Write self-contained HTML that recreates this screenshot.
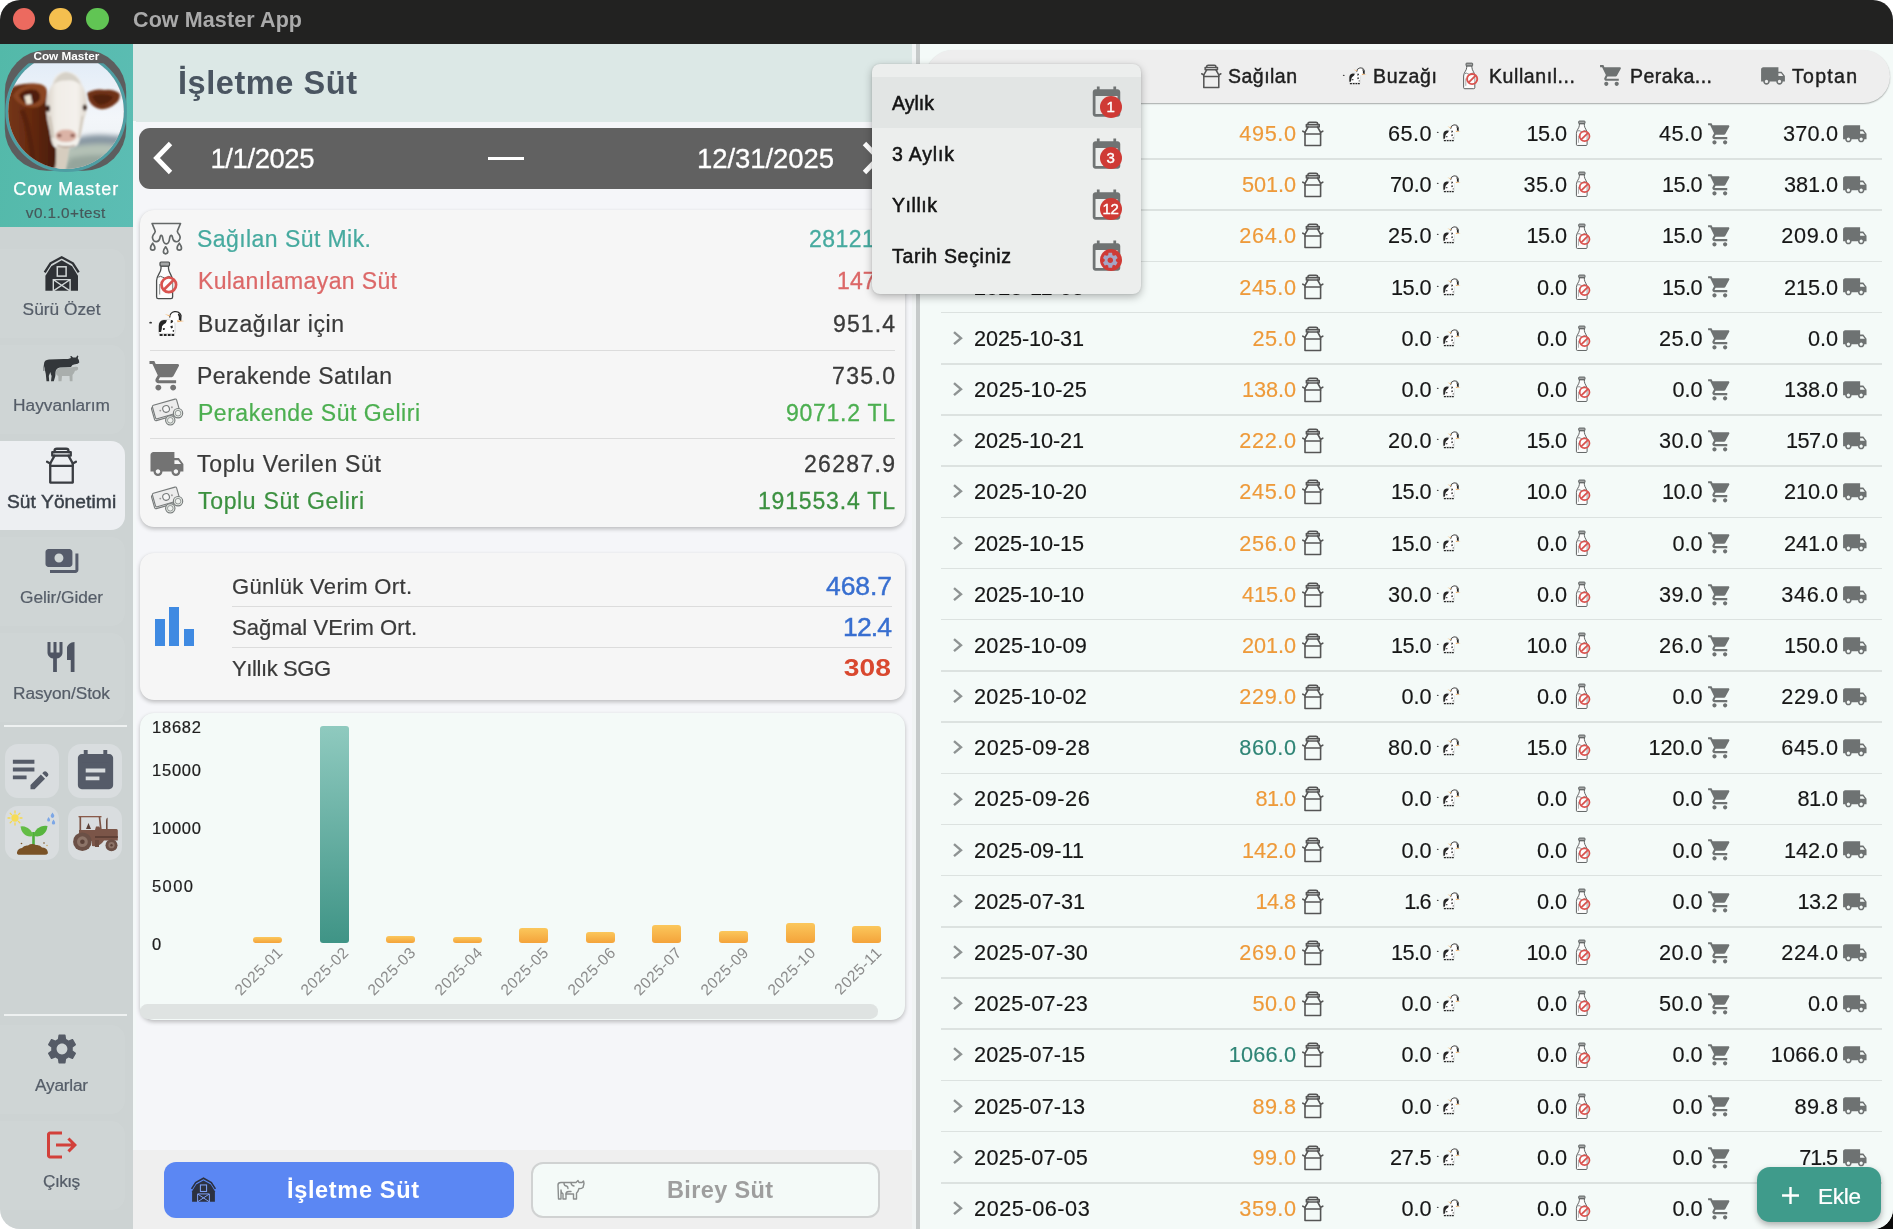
<!DOCTYPE html>
<html lang="tr"><head><meta charset="utf-8"><title>Cow Master App</title>
<style>
html,body{margin:0;padding:0;background:#fff;}
body{width:1893px;height:1229px;overflow:hidden;position:relative;font-family:"Liberation Sans", sans-serif;}
#win{will-change:transform;position:absolute;left:0;top:0;width:1893px;height:1229px;border-radius:20px;overflow:hidden;background:#f5f6f9;}
.b{position:absolute;box-sizing:border-box;}
.t{position:absolute;white-space:nowrap;}
svg{overflow:visible}
</style></head><body>
<svg width="0" height="0" style="position:absolute"><defs>
<linearGradient id="gteal" x1="0" y1="0" x2="0" y2="1"><stop offset="0" stop-color="#8fcabf"/><stop offset="1" stop-color="#3f9486"/></linearGradient>
<linearGradient id="gor" x1="0" y1="0" x2="0" y2="1"><stop offset="0" stop-color="#fbc75c"/><stop offset="1" stop-color="#f4a33a"/></linearGradient>
<symbol id="can" viewBox="0 0 25.6 25.6"><g fill="none" stroke="currentColor" stroke-width="1.6" stroke-linejoin="round" stroke-linecap="round">
<path d="M8 3.6V2.6Q8 1.2 9.6 1.2H16Q17.6 1.2 17.6 2.6V3.6"/>
<path d="M6.4 3.6H19.2V6H6.4Z"/>
<path d="M8 6L5 11.4V24.6H20.6V11.4L17.6 6"/>
<path d="M2.8 10.2L5 11.4M22.8 10.2L20.6 11.4"/>
<path d="M5 13H20.6"/>
</g></symbol>
<symbol id="cart" viewBox="0 0 24 24"><path fill="currentColor" d="M7 18c-1.1 0-1.99.9-1.99 2S5.9 22 7 22s2-.9 2-2-.9-2-2-2zM1 2v2h2l3.6 7.59-1.35 2.45c-.16.28-.25.61-.25.96 0 1.1.9 2 2 2h12v-2H7.42c-.14 0-.25-.11-.25-.25l.03-.12.9-1.63h7.45c.75 0 1.41-.41 1.75-1.03l3.58-6.49c.08-.14.12-.31.12-.48 0-.55-.45-1-1-1H5.21l-.94-2H1zm16 16c-1.1 0-1.99.9-1.99 2s.89 2 1.99 2 2-.9 2-2-.9-2-2-2z"/></symbol>
<symbol id="truck" viewBox="0 0 24 24"><path fill="currentColor" d="M20 8h-3V4H3c-1.1 0-2 .9-2 2v11h2c0 1.66 1.34 3 3 3s3-1.34 3-3h6c0 1.66 1.34 3 3 3s3-1.34 3-3h2v-5l-3-4zM6 18.5c-.83 0-1.5-.67-1.5-1.5s.67-1.5 1.5-1.5 1.5.67 1.5 1.5-.67 1.5-1.5 1.5zm13.5-9l1.96 2.5H17V9.500h2.5zm-1.5 9c-.83 0-1.5-.67-1.5-1.5s.67-1.5 1.5-1.5 1.5.67 1.5 1.5-.67 1.5-1.5 1.5z"/></symbol>
<symbol id="bottle" viewBox="0 0 32 42">
<path d="M11 7V9.500C11 13.500 6.600 16.500 6.600 21.500V38Q6.600 39.600 8.200 39.600H21Q22.600 39.600 22.600 38V21.500C22.600 16.500 18.500 13.500 18.500 9.500V7Z" fill="#fcfcfc" stroke="#4a4d4d" stroke-width="1.300" stroke-linejoin="round"/>
<rect x="10" y="3" width="9.500" height="4" rx="1" fill="#a4a6a6" stroke="#4a4d4d" stroke-width="1.200"/>
<path d="M8.400 18.200q2.100 -1.800 4.200 0t4.200 0t4 0" fill="none" stroke="#5a5d5d" stroke-width="1"/>
<path d="M9.700 25V35.500" stroke="#7a7d7d" stroke-width="0.900"/>
<circle cx="18.800" cy="25.800" r="7.300" fill="rgba(255,255,255,0.4)" stroke="#d9534f" stroke-width="2.700"/>
<path d="M13.600 31L24 20.600" stroke="#d9534f" stroke-width="2.700"/>
</symbol>
<symbol id="calf" viewBox="0 0 38 32">
<ellipse cx="2.600" cy="16.700" rx="1.400" ry="0.900" fill="#333"/>
<path d="M10.800 27.500V20Q10.800 14.500 16 13.800L22 13.200Q26.800 13.600 27 18.500V27.500Z" fill="#fff" stroke="#bbb" stroke-width="0.500"/>
<path d="M10.800 26V20Q10.800 14.500 16 14L19 14.200Q18.400 17.500 15.500 18.600Q13.400 19.800 13.800 23L13 26Z" fill="#262626"/>
<path d="M14.800 22.500q1.400 -1 2.300 0.200q-0.300 1.500 -2 1.300z" fill="#262626"/>
<circle cx="27.300" cy="10.800" r="5.800" fill="#fff"/>
<path d="M21.700 11.500A5.800 5.800 0 0 1 33 9.500L32.600 15" fill="none" stroke="#2a2a2a" stroke-width="1.300"/>
<path d="M30.600 7.500Q33.400 9 32.800 14.200L30.800 14Q31.300 10.500 29.800 8.200Z" fill="#262626"/>
<path d="M16.800 8.200L22.400 9.300L21.800 10.600Z" fill="#f2b46e"/>
<path d="M28.800 14.200L36.400 15L29.600 16.300Z" fill="#f2b46e"/>
<path d="M22.800 14.200q1.600 -0.400 2.400 1q-0.800 2.200 -2.600 2z M22.300 20.200l2.200 -0.800l0.400 2.400l-1.800 0.600z M24.800 24l1.400 0.300l-0.400 1.600l-1.200 -0.300z" fill="#262626"/>
<path d="M11.600 29H14.600M15.800 29H18.600M19.800 29H22.600M23.600 29H26.200" stroke="#262626" stroke-width="1.800"/>
</symbol>
<symbol id="chev" viewBox="0 0 24 24"><path fill="currentColor" d="M10 6L8.590 7.410 13.170 12l-4.580 4.590L10 18l6-6z"/></symbol>
<symbol id="plus" viewBox="0 0 24 24"><path fill="currentColor" d="M19 13h-6v6h-2v-6H5v-2h6V5h2v6h6v2z"/></symbol>
<symbol id="gear" viewBox="0 0 24 24"><path fill="currentColor" d="M19.140 12.940c.04-.3.060-.61.060-.94 0-.32-.020-.64-.070-.94l2.030-1.580c.18-.14.23-.41.120-.61l-1.920-3.320c-.12-.22-.37-.29-.59-.22l-2.390.96c-.5-.38-1.030-.7-1.620-.94l-.36-2.540c-.04-.24-.24-.41-.48-.41h-3.840c-.24 0-.43.170-.47.410l-.36 2.540c-.59.240-1.130.570-1.620.940l-2.390-.96c-.22-.08-.47 0-.59.220L2.740 8.870c-.12.210-.08.470.12.610l2.030 1.580c-.05.300-.09.630-.09.940s.02.640.07.940l-2.030 1.580c-.18.140-.23.410-.12.610l1.920 3.320c.12.220.37.290.59.220l2.390-.96c.5.380 1.030.7 1.620.94l.36 2.540c.05.240.24.410.48.410h3.840c.24 0 .44-.17.47-.41l.36-2.540c.59-.24 1.130-.56 1.620-.94l2.390.96c.22.080.47 0 .59-.22l1.920-3.320c.12-.22.070-.47-.12-.61l-2.010-1.580zM12 15.600c-1.980 0-3.600-1.620-3.600-3.600s1.620-3.600 3.600-3.600 3.600 1.620 3.600 3.600-1.620 3.600-3.600 3.600z"/></symbol>
<symbol id="logout" viewBox="0 0 24 24"><path fill="currentColor" d="M17 7l-1.410 1.410L18.170 11H8v2h10.170l-2.580 2.580L17 17l5-5zM4 5h8V3H4c-1.100 0-2 .9-2 2v14c0 1.100.9 2 2 2h8v-2H4V5z"/></symbol>
<symbol id="barchart" viewBox="0 0 24 24"><path fill="currentColor" d="M5 9.200h3V19H5zM10.600 5h2.800v14h-2.800zm5.600 8H19v6h-2.800z"/></symbol>
<symbol id="restaurant" viewBox="0 0 24 24"><path fill="currentColor" d="M11 9H9V2H7v7H5V2H3v7c0 2.120 1.660 3.840 3.750 3.970V22h2.500v-9.030C11.340 12.840 13 11.120 13 9V2h-2v7zm5-3v8h2.500v8H21V2c-2.760 0-5 2.240-5 4z"/></symbol>
<symbol id="payments" viewBox="0 0 24 24"><path fill="currentColor" d="M19 14V6c0-1.100-.9-2-2-2H3c-1.100 0-2 .9-2 2v8c0 1.100.9 2 2 2h14c1.100 0 2-.9 2-2zm-9-1c-1.660 0-3-1.340-3-3s1.340-3 3-3 3 1.340 3 3-1.340 3-3 3zm13-6v11c0 1.100-.9 2-2 2H4v-2h17V7h2z"/></symbol>
<symbol id="eventnote" viewBox="0 0 24 24"><path fill="currentColor" fill-rule="evenodd" d="M19 3h-1V1h-2v2H8V1H6v2H5c-1.110 0-2 .9-2 2v14c0 1.100.890 2 2 2h14c1.100 0 2-.9 2-2V5c0-1.100-.9-2-2-2zM7 10.500h10v2H7zM7 14.500h7v2H7z"/><path d="M5.200 7.400H18.800" stroke="currentColor" stroke-width="0.1"/></symbol>
<symbol id="editnote" viewBox="0 0 24 24"><path fill="currentColor" d="M3 10h11v2H3v-2zm0-2h11V6H3v2zm0 8h7v-2H3v2zm15.010-3.130l.71-.71c.39-.39 1.020-.39 1.410 0l.71.71c.39.39.39 1.020 0 1.410l-.71.71-2.120-2.120zm-.71.71l-5.300 5.300V21h2.120l5.300-5.300-2.120-2.120z"/></symbol>
<symbol id="cal" viewBox="0 0 24 24"><path fill="currentColor" d="M20 3h-1V1h-2v2H7V1H5v2H4c-1.100 0-2 .9-2 2v16c0 1.100.9 2 2 2h16c1.100 0 2-.9 2-2V5c0-1.100-.9-2-2-2zm0 18H4V8h16v13z"/></symbol>
<symbol id="barn" viewBox="0 0 40 40">
<path d="M3.700 18.400L9.500 9.300L20.700 3.200L31.900 9.300L37.700 18.400" fill="none" stroke="currentColor" stroke-width="2.300" stroke-linejoin="miter"/>
<path fill="currentColor" d="M4.400 36.800V21.800L10.300 12.200L20.700 6.300L31.100 12.200L37 21.800V36.800Z"/>
<rect x="16.300" y="12.800" width="8.800" height="9.300" fill="none" stroke="var(--bg)" stroke-width="1.500"/>
<path d="M12.300 37.200V25.600H29.100V37.200M12.800 26L28.600 36.600M28.600 26L12.800 36.600" fill="none" stroke="var(--bg)" stroke-width="1.400"/>
</symbol>
</defs></svg>
<div class="b" style="right:0;bottom:0;width:22px;height:22px;background:#0a0a0a;"></div>
<div id="win">
<div class="b" style="left:0px;top:0px;width:1893px;height:44px;background:#222221;"></div>
<div class="b" style="left:12.600000000000001px;top:8.100000000000001px;width:22.4px;height:22.4px;background:#ec6a5f;border-radius:50%;"></div>
<div class="b" style="left:49.400000000000006px;top:8.100000000000001px;width:22.4px;height:22.4px;background:#f4bf4f;border-radius:50%;"></div>
<div class="b" style="left:86.39999999999999px;top:8.100000000000001px;width:22.4px;height:22.4px;background:#61c554;border-radius:50%;"></div>
<div class="t" style="left:133.00px;top:5.55px;font-size:21.5px;line-height:28px;color:#aaaaaa;letter-spacing:0.105px;font-weight:700;">Cow Master App</div>
<div class="b" style="left:0px;top:44px;width:133px;height:1185px;background:#cdd3d3;"></div>
<div class="b" style="left:0px;top:44px;width:133px;height:183px;background:linear-gradient(100deg,#53b9a9,#5cbdb4);"></div>
<svg class="b" style="left:0;top:44px" width="133" height="183" viewBox="0 44 133 183">
<defs>
<clipPath id="lgc"><circle cx="66.050" cy="111.200" r="57.800"/></clipPath>
<clipPath id="lgr"><rect x="0" y="63.300" width="133" height="120"/></clipPath>
<filter id="bl1" x="-20%" y="-20%" width="140%" height="140%"><feGaussianBlur stdDeviation="0.900"/></filter>
<filter id="bl2" x="-20%" y="-20%" width="140%" height="140%"><feGaussianBlur stdDeviation="2.400"/></filter>
<linearGradient id="sky" x1="0" y1="0" x2="0" y2="1"><stop offset="0" stop-color="#e2ecf7"/><stop offset="0.500" stop-color="#f3f6fa"/><stop offset="1" stop-color="#e9edf0"/></linearGradient>
<linearGradient id="brn" x1="0" y1="0" x2="1" y2="0"><stop offset="0" stop-color="#7a3a1c"/><stop offset="0.550" stop-color="#65290f"/><stop offset="1" stop-color="#451a09"/></linearGradient>
<linearGradient id="fce" x1="0" y1="0" x2="1" y2="0"><stop offset="0" stop-color="#d9d2c8"/><stop offset="0.250" stop-color="#f1ede7"/><stop offset="0.750" stop-color="#f4f1ec"/><stop offset="1" stop-color="#ddd6cc"/></linearGradient>
</defs>
<rect x="4.800" y="49.900" width="121.400" height="120.900" rx="42" ry="42" fill="#5d5d5e"/>
<circle cx="66.050" cy="111.200" r="59.200" fill="none" stroke="#4e9ea3" stroke-width="3.200" clip-path="url(#lgr)"/>
<g clip-path="url(#lgr)"><g clip-path="url(#lgc)">
<rect x="0" y="60" width="133" height="115" fill="url(#sky)"/>
<g filter="url(#bl2)">
<path d="M72 139Q92 133 112 135.500L130 137V176H60Z" fill="#8796a2"/>
<path d="M66 148Q95 141 128 146V176H60Z" fill="#b4c1b6"/>
<path d="M70 158Q96 152 128 158V176H60Z" fill="#95a59c"/>
</g>
<g filter="url(#bl1)">
<path d="M0 102Q6 88 18 85Q30 82 42 85Q47 87 47 93L46.500 100Q45.500 110 47.500 120Q50 130 51.600 141Q53 147 56 148L57 172H0Z" fill="url(#brn)"/>
<path d="M13 96Q18 86 31 83.700Q42 83 46 88Q48 96 44 103Q38 109 28 107Q18 105 13 96Z" fill="#8a4522"/>
<path d="M19 95Q25 88 36 90Q41 93 40 99Q36 105 28 104Q21 102 19 95Z" fill="#4f1f0c"/>
<path d="M24.300 96L30.500 94.500L32.300 103.600L26.600 104.600Z" fill="#ece3d2"/>
<path d="M22 110Q30 128 34 170" stroke="#4a1c0a" stroke-width="5" fill="none" opacity="0.550"/>
<path d="M87 93Q95 88 105 90Q114 89 119.800 94Q120.500 100 115 104Q108 110 100 109Q93 108 88.500 100Z" fill="#6f3117"/>
<path d="M92 96Q102 92.500 113 96.500Q110 104 100 105Q95 103 92 96Z" fill="#53220e"/>
<path d="M56 147H69.500L67.500 160L65 174H54Q57 160 56 147Z" fill="#d6cdbf"/>
<path d="M52.600 84Q55 72 66 71.500Q78 72 81.600 84Q86.500 92 87 104Q87 112 84 120Q82 132 79.500 141Q78 147 72 147.500H59Q53 147 51.600 141Q50 130 47.500 120Q45.500 110 46.500 100Q48 90 52.600 84Z" fill="url(#fce)"/>
<path d="M53 85Q57 73 66 72Q77 73 81 85Q74 79 66 80.500Q58 80 53 85Z" fill="#d6d1c8"/>
<path d="M55.500 135Q57 129.500 66 129.500Q75 129.500 76.500 135Q77 141.500 66 142Q55 141.500 55.500 135Z" fill="#dbb3a6"/>
<ellipse cx="59.300" cy="135.500" rx="2.300" ry="1.800" fill="#8e5c52"/><ellipse cx="72.600" cy="135.500" rx="2.300" ry="1.800" fill="#8e5c52"/>
<path d="M57 145.500Q66 148.500 75 145.500" stroke="#a99384" stroke-width="1.300" fill="none"/>
<ellipse cx="47.900" cy="108.500" rx="2.200" ry="3.300" fill="#3a241a"/><ellipse cx="84.700" cy="107.500" rx="2" ry="3.100" fill="#3a241a"/>
<path d="M49.500 116Q52 128 53 138" stroke="#c9c0b3" stroke-width="2.400" fill="none"/>
<path d="M82.500 116Q80.500 128 79 138" stroke="#cfc7bb" stroke-width="2" fill="none"/>
</g>
</g></g>
<text x="66.400" y="60.300" text-anchor="middle" font-family="Liberation Sans, sans-serif" font-weight="700" font-size="11.400" fill="#ffffff" textLength="66" lengthAdjust="spacingAndGlyphs">Cow Master</text>
</svg>
<div class="t" style="left:13.30px;top:178.26px;font-size:18px;line-height:23px;color:#ffffff;letter-spacing:0.998px;-webkit-text-stroke:0.25px #ffffff;">Cow Master</div>
<div class="t" style="left:25.85px;top:202.50px;font-size:15.3px;line-height:20px;color:#46585a;letter-spacing:0.422px;-webkit-text-stroke:0.2px #46585a;">v0.1.0+test</div>
<div class="b" style="left:0px;top:249px;width:125px;height:89px;background:rgba(255,255,255,0.06);border-radius:0 14px 14px 0;"></div>
<div class="b" style="left:0px;top:345px;width:125px;height:89px;background:rgba(255,255,255,0.06);border-radius:0 14px 14px 0;"></div>
<div class="b" style="left:0px;top:537px;width:125px;height:89px;background:rgba(255,255,255,0.06);border-radius:0 14px 14px 0;"></div>
<div class="b" style="left:0px;top:633px;width:125px;height:89px;background:rgba(255,255,255,0.06);border-radius:0 14px 14px 0;"></div>
<div class="b" style="left:0px;top:1025px;width:125px;height:89px;background:rgba(255,255,255,0.06);border-radius:0 14px 14px 0;"></div>
<div class="b" style="left:0px;top:1121px;width:125px;height:89px;background:rgba(255,255,255,0.06);border-radius:0 14px 14px 0;"></div>
<div class="b" style="left:0px;top:441px;width:125px;height:89px;background:#edeff2;border-radius:0 14px 14px 0;"></div>
<div class="t" style="left:22.60px;top:298.01px;font-size:17.3px;line-height:22px;color:#555d68;letter-spacing:0.014px;-webkit-text-stroke:0.22px #555d68;">Sürü Özet</div>
<div class="t" style="left:13.10px;top:394.01px;font-size:17.3px;line-height:22px;color:#555d68;letter-spacing:-0.010px;-webkit-text-stroke:0.22px #555d68;">Hayvanlarım</div>
<div class="t" style="left:6.95px;top:489.05px;font-size:19.2px;line-height:25px;color:#3a4049;letter-spacing:0.072px;-webkit-text-stroke:0.45px #3a4049;">Süt Yönetimi</div>
<div class="t" style="left:20.10px;top:586.01px;font-size:17.3px;line-height:22px;color:#555d68;letter-spacing:-0.064px;-webkit-text-stroke:0.22px #555d68;">Gelir/Gider</div>
<div class="t" style="left:13.10px;top:682.01px;font-size:17.3px;line-height:22px;color:#555d68;letter-spacing:-0.108px;-webkit-text-stroke:0.22px #555d68;">Rasyon/Stok</div>
<div class="t" style="left:35.10px;top:1074.01px;font-size:17.3px;line-height:22px;color:#555d68;letter-spacing:-0.248px;-webkit-text-stroke:0.22px #555d68;">Ayarlar</div>
<div class="t" style="left:43.10px;top:1170.01px;font-size:17.3px;line-height:22px;color:#555d68;letter-spacing:-0.602px;-webkit-text-stroke:0.22px #555d68;">Çıkış</div>
<div class="b" style="left:4px;top:725px;width:123px;height:2px;background:#eef1f1;"></div>
<div class="b" style="left:4px;top:1014px;width:123px;height:2px;background:#eef1f1;"></div>
<div class="b" style="left:4.5px;top:744px;width:54px;height:54px;background:#d9dddf;border-radius:13px;"></div>
<div class="b" style="left:68px;top:744px;width:54px;height:54px;background:#d9dddf;border-radius:13px;"></div>
<div class="b" style="left:4.5px;top:806px;width:54px;height:54px;background:#d9dddf;border-radius:13px;"></div>
<div class="b" style="left:68px;top:806px;width:54px;height:54px;background:#d9dddf;border-radius:13px;"></div>
<svg class="b" style="left:41px;top:254px;color:#2f3236;--bg:#d3d8d8;" width="40" height="40"><use href="#barn"/></svg>
<svg class="b" style="left:40px;top:352px" width="44" height="34" viewBox="40 352 44 34">
<path d="M55.800 372.500Q56 368.500 60 368Q66 367.300 72 367.300L75.500 366.800Q77 366.300 78 367.300L78.200 369.200Q77 370.800 75 370.800Q74 374 72.500 375L72.500 381.300H69.800L69.500 376H62L61.500 381.300H58.500L58.300 376Q56 375 55.800 372.500Z" fill="#a9aeac"/>
<path d="M44 364Q44 359.800 49 359.500Q58 358.800 68 359L71 358L70.200 356.300L71.500 356L73 357.600L76 357.500L77.300 355.600L78.400 356L77.800 358.300Q79.600 360.500 79.300 362.500Q78 364.300 75 364.200Q72 364.500 71 367L60 367.500Q56 368 55.500 372L55.300 376L53.800 381.300H51L51.600 376Q50.500 374.500 50.500 372Q49.500 374 48.800 376L49.200 381.300H46.500L45.800 374Q44.500 370 44.800 366Q44 368 44.200 371L43.600 371Q43.300 367 44 364Z" fill="#33373a"/>
</svg>
<svg class="b" style="left:43.3px;top:446.7px;color:#3a3d42;" width="37" height="37"><use href="#can"/></svg>
<svg class="b" style="left:43.6px;top:543px;color:#565c6b;" width="35.9" height="35.9"><use href="#payments"/></svg>
<svg class="b" style="left:43.3px;top:639px;color:#4f5563;" width="36" height="36"><use href="#restaurant"/></svg>
<svg class="b" style="left:7.3px;top:747.6px;color:#555b68;" width="47" height="47"><use href="#editnote"/></svg>
<svg class="b" style="left:71.8px;top:748.2px;color:#555b68;" width="47" height="47"><use href="#eventnote"/></svg>
<svg class="b" style="left:5px;top:806px" width="54" height="54" viewBox="5 806 54 54">
<g stroke="#f5d94e" stroke-width="1.300" stroke-linecap="round"><path d="M15 811V813M15 823V825M8 818H10M20 818H22M10.200 813.200L11.600 814.600M18.400 821.400L19.800 822.800M10.200 822.800L11.600 821.400M18.400 814.600L19.800 813.200"/></g>
<circle cx="15" cy="818" r="3.700" fill="#f7dc55"/>
<path d="M52.500 812.500q1.800 2.400 1.800 3.600a1.800 1.800 0 0 1-3.600 0q0-1.200 1.800-3.600zM48.600 817q1.500 2 1.500 3a1.500 1.500 0 0 1-3 0q0-1 1.500-3zM53.500 819.500q1.700 2.300 1.700 3.400a1.700 1.700 0 0 1-3.400 0q0-1.100 1.700-3.400z" fill="#7da7e6"/>
<path d="M33.500 846V832" stroke="#4fae3c" stroke-width="2.600" fill="none"/>
<path d="M33.300 836Q32 829 24.500 826.500Q22 826 20.500 826.500Q21.500 833 26 835.500Q29.500 837 33.300 836Z" fill="#63bd45"/>
<path d="M33.700 836Q34 829.500 41 826.500Q44.500 825.300 47.500 826Q47 832 42.500 835Q38.500 837.300 33.700 836Z" fill="#57b53e"/>
<path d="M17 852.500Q17.500 848.500 22 848Q24 845 28 845.500Q31.500 843 36 845Q40 844.500 42 847.500Q46.500 847.500 47.500 851Q49 854.500 45 854.800H20Q16.500 854.800 17 852.500Z" fill="#7a5226"/>
<circle cx="21.500" cy="843.500" r="0.800" fill="#7a5226"/><circle cx="44" cy="843" r="0.800" fill="#7a5226"/><circle cx="47" cy="845.500" r="0.700" fill="#c9a24a"/>
</svg>
<svg class="b" style="left:68px;top:806px" width="54" height="54" viewBox="68 806 54 54">
<path d="M78.500 817.300H101.500V816H78.500Z" fill="#8a5a4a"/>
<path d="M80.300 817V832M99.500 817L101 831" stroke="#7c5446" stroke-width="1.700" fill="none"/>
<path d="M86 829L88.500 823L91 829Z" fill="#5b4138"/>
<path d="M106 829V820.500Q106 818.500 107.600 817.500V829Z" fill="#6b4a3e"/>
<path d="M79 830H95L96 826.500H99L101 829H116.500Q117.800 829 117.800 830.500V840.500H104Q100 847 92 846V841H79Z" fill="#7b5548"/>
<path d="M95 836H117.800V838H95Z" fill="#5f4036"/>
<circle cx="82.400" cy="841.700" r="9.300" fill="#6b5046"/><circle cx="82.400" cy="841.700" r="5.400" fill="#8d7468"/><circle cx="82.400" cy="841.700" r="2.300" fill="#5b4138"/>
<circle cx="111.500" cy="845.200" r="6" fill="#6b5046"/><circle cx="111.500" cy="845.200" r="3.100" fill="#8d7468"/><circle cx="111.500" cy="845.200" r="1.200" fill="#5b4138"/>
<path d="M95 840H99V847H95Z" fill="#6b4a3e"/>
</svg>
<svg class="b" style="left:44px;top:1031px;color:#555b66;" width="36" height="36"><use href="#gear"/></svg>
<svg class="b" style="left:44px;top:1127px;color:#d2403a;" width="36" height="36"><use href="#logout"/></svg>
<div class="b" style="left:133px;top:44px;width:779px;height:1185px;background:#f5f6f9;"></div>
<div class="b" style="left:133px;top:44px;width:779px;height:78px;background:#dce8e6;"></div>
<div class="b" style="left:133px;top:121px;width:3px;height:1108px;background:#f4f8f8;"></div>
<div class="t" style="left:178.00px;top:62.24px;font-size:32.5px;line-height:42px;color:#4a5561;letter-spacing:0.561px;font-weight:700;">İşletme Süt</div>
<div class="b" style="left:139px;top:128px;width:766px;height:61px;background:#616161;border-radius:11px;"></div>
<svg class="b" style="left:150px;top:138px" width="30" height="40"><path d="M20.500 5.500L6.500 20L20.500 34.500" fill="none" stroke="#fff" stroke-width="4.800"/></svg>
<svg class="b" style="left:855px;top:138px" width="30" height="40"><path d="M9.500 5.500L23.500 20L9.500 34.500" fill="none" stroke="#fff" stroke-width="4.800"/></svg>
<div class="t" style="left:210.50px;top:141.47px;font-size:27.5px;line-height:36px;color:#ffffff;letter-spacing:-0.435px;-webkit-text-stroke:0.3px #ffffff;">1/1/2025</div>
<div class="t" style="left:697.00px;top:141.47px;font-size:27.5px;line-height:36px;color:#ffffff;letter-spacing:-0.070px;-webkit-text-stroke:0.3px #ffffff;">12/31/2025</div>
<div class="b" style="left:488px;top:156.6px;width:36px;height:3.2px;background:#ffffff;"></div>
<div class="b" style="left:140px;top:210px;width:765px;height:317px;background:#f6f6f6;border-radius:14px;box-shadow:0 2px 4px rgba(0,0,0,0.24),0 0 1px rgba(0,0,0,0.06);"></div>
<div class="t" style="left:197.00px;top:224.03px;font-size:23px;line-height:30px;color:#46aa9f;letter-spacing:0.435px;-webkit-text-stroke:0.22px #46aa9f;">Sağılan Süt Mik.</div>
<div class="t" style="left:809.00px;top:224.03px;font-size:23px;line-height:30px;color:#46aa9f;letter-spacing:0.476px;-webkit-text-stroke:0.3px #46aa9f;">28121.3</div>
<div class="t" style="left:198.00px;top:266.03px;font-size:23px;line-height:30px;color:#dc6868;letter-spacing:0.371px;-webkit-text-stroke:0.22px #dc6868;">Kulanılamayan Süt</div>
<div class="t" style="left:837.00px;top:266.03px;font-size:23px;line-height:30px;color:#dc6868;letter-spacing:0.110px;-webkit-text-stroke:0.3px #dc6868;">147.0</div>
<div class="t" style="left:198.00px;top:309.03px;font-size:23px;line-height:30px;color:#3a3a3a;letter-spacing:0.610px;-webkit-text-stroke:0.22px #3a3a3a;">Buzağılar için</div>
<div class="t" style="left:833.00px;top:309.03px;font-size:23px;line-height:30px;color:#3a3a3a;letter-spacing:1.110px;-webkit-text-stroke:0.3px #3a3a3a;">951.4</div>
<div class="t" style="left:197.00px;top:361.03px;font-size:23px;line-height:30px;color:#3a3a3a;letter-spacing:0.359px;-webkit-text-stroke:0.22px #3a3a3a;">Perakende Satılan</div>
<div class="t" style="left:832.00px;top:361.03px;font-size:23px;line-height:30px;color:#3a3a3a;letter-spacing:1.360px;-webkit-text-stroke:0.3px #3a3a3a;">735.0</div>
<div class="t" style="left:198.00px;top:398.03px;font-size:23px;line-height:30px;color:#4caf50;letter-spacing:0.514px;-webkit-text-stroke:0.22px #4caf50;">Perakende Süt Geliri</div>
<div class="t" style="left:786.00px;top:398.03px;font-size:23px;line-height:30px;color:#4caf50;letter-spacing:0.729px;-webkit-text-stroke:0.3px #4caf50;">9071.2 TL</div>
<div class="t" style="left:197.00px;top:449.03px;font-size:23px;line-height:30px;color:#3a3a3a;letter-spacing:0.711px;-webkit-text-stroke:0.22px #3a3a3a;">Toplu Verilen Süt</div>
<div class="t" style="left:804.00px;top:449.03px;font-size:23px;line-height:30px;color:#3a3a3a;letter-spacing:1.309px;-webkit-text-stroke:0.3px #3a3a3a;">26287.9</div>
<div class="t" style="left:198.00px;top:486.03px;font-size:23px;line-height:30px;color:#3c9140;letter-spacing:0.669px;-webkit-text-stroke:0.22px #3c9140;">Toplu Süt Geliri</div>
<div class="t" style="left:758.00px;top:486.03px;font-size:23px;line-height:30px;color:#3c9140;letter-spacing:0.825px;-webkit-text-stroke:0.3px #3c9140;">191553.4 TL</div>
<div class="b" style="left:150px;top:349.5px;width:745px;height:1.5px;background:#dcdcdc;"></div>
<div class="b" style="left:150px;top:437.5px;width:745px;height:1.5px;background:#dcdcdc;"></div>
<svg class="b" style="left:150px;top:221px" width="32" height="34" viewBox="0 0 32 34">
<g fill="none" stroke="#646868" stroke-width="1.700" stroke-linejoin="round" stroke-linecap="round">
<path d="M2.100 2.500H30.500L27.600 9.500Q27 10.500 28 12Q31 15.500 29.800 18Q28.500 21 26 20.700Q23.500 20.500 22.800 17.500Q22.300 14.600 21.400 14.400Q20 14.400 19.600 17.500Q19 22.800 16.300 22.800Q13.400 22.800 12.800 17.500Q12.400 14.400 11.200 14.400Q10.200 14.600 9.800 17.500Q9 20.500 6.500 20.700Q4 21 2.800 18Q1.600 15.500 4.600 12Q5.600 10.500 5 9.500Z"/>
<path d="M2.700 22.200q2.200 2.900 2.200 4.800a2.200 2.200 0 0 1-4.400 0q0-1.900 2.200-4.800zM15.600 25.800q2.200 2.900 2.200 4.800a2.200 2.200 0 0 1-4.400 0q0-1.900 2.200-4.800zM29.300 22.200q2.200 2.900 2.200 4.800a2.200 2.200 0 0 1-4.400 0q0-1.900 2.200-4.800z"/>
</g></svg>
<svg class="b" style="left:150px;top:259px;" width="32" height="42"><use href="#bottle"/></svg>
<svg class="b" style="left:148px;top:306px;" width="38" height="32"><use href="#calf"/></svg>
<svg class="b" style="left:148.2px;top:357.8px;color:#737373;" width="35.5" height="35.5"><use href="#cart"/></svg>
<svg class="b" style="left:150.0px;top:398.0px" width="35.500" height="30" viewBox="0 0 38 32">
<g fill="#ececec" stroke="#777b7b" stroke-width="1.200" stroke-linejoin="round">
<g transform="rotate(-16 15 13)">
<rect x="2.500" y="6.500" width="27" height="15" rx="1.500"/>
<rect x="4" y="4.800" width="27" height="15" rx="1.500"/>
<circle cx="17.500" cy="12.300" r="3.600" fill="#f6f6f6"/>
<circle cx="11" cy="12.300" r="1" fill="#999" stroke="none"/><circle cx="24" cy="12.300" r="1" fill="#999" stroke="none"/>
</g>
<circle cx="30" cy="16.200" r="5" fill="#e3e8e3"/><circle cx="30" cy="16.200" r="3" fill="#eef1ee" stroke-width="0.800"/>
<circle cx="21.700" cy="23.800" r="5" fill="#e3e8e3"/><circle cx="21.700" cy="23.800" r="3" fill="#eef1ee" stroke-width="0.800"/>
</g></svg>
<svg class="b" style="left:148.5px;top:445.6px;color:#737373;" width="35.9" height="35.9"><use href="#truck"/></svg>
<svg class="b" style="left:150.0px;top:486.0px" width="35.500" height="30" viewBox="0 0 38 32">
<g fill="#ececec" stroke="#777b7b" stroke-width="1.200" stroke-linejoin="round">
<g transform="rotate(-16 15 13)">
<rect x="2.500" y="6.500" width="27" height="15" rx="1.500"/>
<rect x="4" y="4.800" width="27" height="15" rx="1.500"/>
<circle cx="17.500" cy="12.300" r="3.600" fill="#f6f6f6"/>
<circle cx="11" cy="12.300" r="1" fill="#999" stroke="none"/><circle cx="24" cy="12.300" r="1" fill="#999" stroke="none"/>
</g>
<circle cx="30" cy="16.200" r="5" fill="#e3e8e3"/><circle cx="30" cy="16.200" r="3" fill="#eef1ee" stroke-width="0.800"/>
<circle cx="21.700" cy="23.800" r="5" fill="#e3e8e3"/><circle cx="21.700" cy="23.800" r="3" fill="#eef1ee" stroke-width="0.800"/>
</g></svg>
<div class="b" style="left:140px;top:553px;width:765px;height:147px;background:#f6f6f6;border-radius:14px;box-shadow:0 2px 4px rgba(0,0,0,0.24),0 0 1px rgba(0,0,0,0.06);"></div>
<div class="b" style="left:154.6px;top:619px;width:10px;height:27px;background:#3f8ae2;"></div>
<div class="b" style="left:169.3px;top:607.3px;width:10px;height:38.7px;background:#3f8ae2;"></div>
<div class="b" style="left:184px;top:629px;width:10px;height:17px;background:#3f8ae2;"></div>
<div class="t" style="left:232.00px;top:571.88px;font-size:22px;line-height:29px;color:#3a3a3a;letter-spacing:0.323px;-webkit-text-stroke:0.22px #3a3a3a;">Günlük Verim Ort.</div>
<div class="t" style="left:826.00px;top:569.22px;font-size:26.5px;line-height:34px;color:#386fd0;letter-spacing:-0.078px;-webkit-text-stroke:0.45px #386fd0;">468.7</div>
<div class="b" style="left:232px;top:605.5px;width:660px;height:1.5px;background:#dcdcdc;"></div>
<div class="t" style="left:232.00px;top:612.88px;font-size:22px;line-height:29px;color:#3a3a3a;letter-spacing:0.102px;-webkit-text-stroke:0.22px #3a3a3a;">Sağmal VErim Ort.</div>
<div class="t" style="left:843.00px;top:610.22px;font-size:26.5px;line-height:34px;color:#386fd0;letter-spacing:-0.858px;-webkit-text-stroke:0.45px #386fd0;">12.4</div>
<div class="b" style="left:232px;top:646.5px;width:660px;height:1.5px;background:#dcdcdc;"></div>
<div class="t" style="left:232.00px;top:653.88px;font-size:22px;line-height:29px;color:#3a3a3a;letter-spacing:-0.409px;-webkit-text-stroke:0.22px #3a3a3a;">Yıllık SGG</div>
<div class="t" style="left:849.92px;top:652.41px;font-size:24.5px;line-height:32px;color:#d9482f;font-weight:700;transform:scaleX(1.15);transform-origin:100% 50%;">308</div>
<div class="b" style="left:140px;top:713px;width:765px;height:307px;background:#f4faf8;border-radius:14px;box-shadow:0 2px 4px rgba(0,0,0,0.24),0 0 1px rgba(0,0,0,0.06);overflow:hidden;"></div>
<div class="t" style="left:152.00px;top:716.78px;font-size:16.5px;line-height:21px;color:#1e1e1e;letter-spacing:0.779px;-webkit-text-stroke:0.22px #1e1e1e;">18682</div>
<div class="t" style="left:152.00px;top:759.78px;font-size:16.5px;line-height:21px;color:#1e1e1e;letter-spacing:0.779px;-webkit-text-stroke:0.22px #1e1e1e;">15000</div>
<div class="t" style="left:152.00px;top:817.78px;font-size:16.5px;line-height:21px;color:#1e1e1e;letter-spacing:0.779px;-webkit-text-stroke:0.22px #1e1e1e;">10000</div>
<div class="t" style="left:152.00px;top:875.78px;font-size:16.5px;line-height:21px;color:#1e1e1e;letter-spacing:1.431px;-webkit-text-stroke:0.22px #1e1e1e;">5000</div>
<div class="t" style="left:152.00px;top:933.78px;font-size:16.5px;line-height:21px;color:#1e1e1e;-webkit-text-stroke:0.22px #1e1e1e;">0</div>
<svg class="b" style="left:253.10000000000002px;top:937px" width="29" height="6"><rect width="29" height="6" rx="3" fill="url(#gor)"/></svg>
<div class="t" style="left:272.6px;top:943px;font-size:15.5px;line-height:20px;color:#8c8c8c;letter-spacing:0.5px;transform-origin:100% 0;transform:translateX(-100%) rotate(-45deg);">2025-01</div>
<svg class="b" style="left:319.9px;top:726px" width="29" height="217"><rect width="29" height="217" rx="3" fill="url(#gteal)"/></svg>
<div class="t" style="left:339.4px;top:943px;font-size:15.5px;line-height:20px;color:#8c8c8c;letter-spacing:0.5px;transform-origin:100% 0;transform:translateX(-100%) rotate(-45deg);">2025-02</div>
<svg class="b" style="left:386.3px;top:936px" width="29" height="7"><rect width="29" height="7" rx="3" fill="url(#gor)"/></svg>
<div class="t" style="left:405.8px;top:943px;font-size:15.5px;line-height:20px;color:#8c8c8c;letter-spacing:0.5px;transform-origin:100% 0;transform:translateX(-100%) rotate(-45deg);">2025-03</div>
<svg class="b" style="left:453.1px;top:937px" width="29" height="6"><rect width="29" height="6" rx="3" fill="url(#gor)"/></svg>
<div class="t" style="left:472.6px;top:943px;font-size:15.5px;line-height:20px;color:#8c8c8c;letter-spacing:0.5px;transform-origin:100% 0;transform:translateX(-100%) rotate(-45deg);">2025-04</div>
<svg class="b" style="left:519.1px;top:928px" width="29" height="15"><rect width="29" height="15" rx="3" fill="url(#gor)"/></svg>
<div class="t" style="left:538.6px;top:943px;font-size:15.5px;line-height:20px;color:#8c8c8c;letter-spacing:0.5px;transform-origin:100% 0;transform:translateX(-100%) rotate(-45deg);">2025-05</div>
<svg class="b" style="left:586.1px;top:932px" width="29" height="11"><rect width="29" height="11" rx="3" fill="url(#gor)"/></svg>
<div class="t" style="left:605.6px;top:943px;font-size:15.5px;line-height:20px;color:#8c8c8c;letter-spacing:0.5px;transform-origin:100% 0;transform:translateX(-100%) rotate(-45deg);">2025-06</div>
<svg class="b" style="left:652.1px;top:925px" width="29" height="18"><rect width="29" height="18" rx="3" fill="url(#gor)"/></svg>
<div class="t" style="left:671.6px;top:943px;font-size:15.5px;line-height:20px;color:#8c8c8c;letter-spacing:0.5px;transform-origin:100% 0;transform:translateX(-100%) rotate(-45deg);">2025-07</div>
<svg class="b" style="left:719.1px;top:931px" width="29" height="12"><rect width="29" height="12" rx="3" fill="url(#gor)"/></svg>
<div class="t" style="left:738.6px;top:943px;font-size:15.5px;line-height:20px;color:#8c8c8c;letter-spacing:0.5px;transform-origin:100% 0;transform:translateX(-100%) rotate(-45deg);">2025-09</div>
<svg class="b" style="left:786.1px;top:923px" width="29" height="20"><rect width="29" height="20" rx="3" fill="url(#gor)"/></svg>
<div class="t" style="left:805.6px;top:943px;font-size:15.5px;line-height:20px;color:#8c8c8c;letter-spacing:0.5px;transform-origin:100% 0;transform:translateX(-100%) rotate(-45deg);">2025-10</div>
<svg class="b" style="left:852.1px;top:926px" width="29" height="17"><rect width="29" height="17" rx="3" fill="url(#gor)"/></svg>
<div class="t" style="left:871.6px;top:943px;font-size:15.5px;line-height:20px;color:#8c8c8c;letter-spacing:0.5px;transform-origin:100% 0;transform:translateX(-100%) rotate(-45deg);">2025-11</div>
<div class="b" style="left:140px;top:1004.4px;width:738px;height:14.6px;background:#dfe3e2;border-radius:7.3px;"></div>
<div class="b" style="left:133px;top:1150px;width:779px;height:79px;background:#efefef;"></div>
<div class="b" style="left:164px;top:1162px;width:350px;height:56px;background:#5b87f3;border-radius:12px;"></div>
<svg class="b" style="left:189px;top:1176px;color:#2c3140;--bg:#7ea0f5;" width="28" height="28"><use href="#barn"/></svg>
<div class="t" style="left:287.00px;top:1174.86px;font-size:23.5px;line-height:31px;color:#ffffff;letter-spacing:0.662px;font-weight:700;">İşletme Süt</div>
<div class="b" style="left:531px;top:1162px;width:349px;height:56px;background:#f4faf8;border-radius:12px;border:2px solid #d0d2d2;"></div>
<svg class="b" style="left:556px;top:1178px" width="30" height="24" viewBox="0 0 30 24">
<g fill="none" stroke="#8a8d8d" stroke-width="1.400" stroke-linejoin="round" stroke-linecap="round">
<path d="M2 7Q2 4.500 5 4.500H20L22 2.500L23 4.500H26L27.500 3L28 5.500L27 9.500Q25 11 23 10.500Q22 14 20.500 15V21H17.500V16H10V21H7V16Q5 15 5 12V21H2.500Z"/>
<path d="M8 5Q8 8 10.500 8Q12 8.500 12 10.500M15 4.500Q15 7.500 18 8M10 16Q10 13.500 13 13.500H15"/>
</g></svg>
<div class="t" style="left:667.00px;top:1174.86px;font-size:23.5px;line-height:31px;color:#9e9e9e;letter-spacing:0.354px;font-weight:700;">Birey Süt</div>
<div class="b" style="left:912px;top:44px;width:8px;height:1185px;background:#f1f4f4;"></div>
<div class="b" style="left:916px;top:44px;width:3.5px;height:1185px;background:#c6caca;"></div>
<div class="b" style="left:920px;top:44px;width:973px;height:1185px;background:#f4faf8;"></div>
<div class="b" style="left:925.5px;top:49.5px;width:964px;height:53px;background:#eeeeee;border-radius:26.5px;box-shadow:0 1px 1.5px rgba(0,0,0,0.32);"></div>
<svg class="b" style="left:1198.6px;top:63.6px;color:#555;" width="24.6" height="24.6"><use href="#can"/></svg>
<div class="t" style="left:1228.00px;top:63.74px;font-size:19.5px;line-height:25px;color:#1f1f1f;letter-spacing:0.477px;-webkit-text-stroke:0.45px #1f1f1f;">Sağılan</div>
<svg class="b" style="left:1342.1px;top:63.7px;" width="25.8" height="21.8"><use href="#calf"/></svg>
<div class="t" style="left:1373.00px;top:63.74px;font-size:19.5px;line-height:25px;color:#1f1f1f;letter-spacing:0.658px;-webkit-text-stroke:0.45px #1f1f1f;">Buzağı</div>
<svg class="b" style="left:1459.4px;top:60.7px;" width="22.4" height="29.4"><use href="#bottle"/></svg>
<div class="t" style="left:1489.00px;top:63.74px;font-size:19.5px;line-height:25px;color:#1f1f1f;letter-spacing:0.579px;-webkit-text-stroke:0.45px #1f1f1f;">Kullanıl...</div>
<svg class="b" style="left:1599px;top:63px;color:#6e7272;" width="25" height="25"><use href="#cart"/></svg>
<div class="t" style="left:1630.00px;top:63.74px;font-size:19.5px;line-height:25px;color:#1f1f1f;letter-spacing:0.495px;-webkit-text-stroke:0.45px #1f1f1f;">Peraka...</div>
<svg class="b" style="left:1759.9px;top:62.5px;color:#6e7272;" width="26" height="26"><use href="#truck"/></svg>
<div class="t" style="left:1792.00px;top:63.74px;font-size:19.5px;line-height:25px;color:#1f1f1f;letter-spacing:1.290px;-webkit-text-stroke:0.45px #1f1f1f;">Toptan</div>
<svg class="b" style="left:950px;top:123.0px" width="16" height="20"><path d="M4 4.200L11 10.200L4 16.200" fill="none" stroke="#8e9393" stroke-width="2.400"/></svg>
<div class="t" style="left:974.10px;top:119.98px;font-size:21.7px;line-height:28px;color:#161616;letter-spacing:0.078px;-webkit-text-stroke:0.15px #161616;">2025-11-20</div>
<div class="t" style="left:1239.30px;top:119.98px;font-size:21.7px;line-height:28px;color:#ee9a3a;letter-spacing:0.625px;-webkit-text-stroke:0.15px #ee9a3a;">495.0</div>
<svg class="b" style="left:1300.3px;top:120.8px;color:#555;" width="25.6" height="25.6"><use href="#can"/></svg>
<div class="t" style="left:1388.10px;top:119.98px;font-size:21.7px;line-height:28px;color:#161616;letter-spacing:0.433px;-webkit-text-stroke:0.15px #161616;">65.0</div>
<svg class="b" style="left:1436.1px;top:121.0px;" width="25.8" height="21.8"><use href="#calf"/></svg>
<div class="t" style="left:1526.40px;top:119.98px;font-size:21.7px;line-height:28px;color:#161616;letter-spacing:-0.500px;-webkit-text-stroke:0.15px #161616;">15.0</div>
<svg class="b" style="left:1572.4px;top:119.2px;" width="21.4" height="28.1"><use href="#bottle"/></svg>
<div class="t" style="left:1659.10px;top:119.98px;font-size:21.7px;line-height:28px;color:#161616;letter-spacing:0.433px;-webkit-text-stroke:0.15px #161616;">45.0</div>
<svg class="b" style="left:1706.8px;top:120.8px;color:#6e7272;" width="25.6" height="25.6"><use href="#cart"/></svg>
<div class="t" style="left:1783.10px;top:119.98px;font-size:21.7px;line-height:28px;color:#161616;letter-spacing:0.175px;-webkit-text-stroke:0.15px #161616;">370.0</div>
<svg class="b" style="left:1842.3px;top:120.8px;color:#6e7272;" width="25.6" height="25.6"><use href="#truck"/></svg>
<div class="b" style="left:941px;top:158.2px;width:941px;height:1.5px;background:#dce2e0;"></div>
<svg class="b" style="left:950px;top:174.2px" width="16" height="20"><path d="M4 4.200L11 10.200L4 16.200" fill="none" stroke="#8e9393" stroke-width="2.400"/></svg>
<div class="t" style="left:974.10px;top:171.17px;font-size:21.7px;line-height:28px;color:#161616;letter-spacing:-0.233px;-webkit-text-stroke:0.15px #161616;">2025-11-15</div>
<div class="t" style="left:1242.10px;top:171.17px;font-size:21.7px;line-height:28px;color:#ee9a3a;letter-spacing:-0.075px;-webkit-text-stroke:0.15px #ee9a3a;">501.0</div>
<svg class="b" style="left:1300.3px;top:171.99px;color:#555;" width="25.6" height="25.6"><use href="#can"/></svg>
<div class="t" style="left:1389.90px;top:171.17px;font-size:21.7px;line-height:28px;color:#161616;letter-spacing:-0.167px;-webkit-text-stroke:0.15px #161616;">70.0</div>
<svg class="b" style="left:1436.1px;top:172.19px;" width="25.8" height="21.8"><use href="#calf"/></svg>
<div class="t" style="left:1523.60px;top:171.17px;font-size:21.7px;line-height:28px;color:#161616;letter-spacing:0.433px;-webkit-text-stroke:0.15px #161616;">35.0</div>
<svg class="b" style="left:1572.4px;top:170.39px;" width="21.4" height="28.1"><use href="#bottle"/></svg>
<div class="t" style="left:1661.90px;top:171.17px;font-size:21.7px;line-height:28px;color:#161616;letter-spacing:-0.500px;-webkit-text-stroke:0.15px #161616;">15.0</div>
<svg class="b" style="left:1706.8px;top:171.99px;color:#6e7272;" width="25.6" height="25.6"><use href="#cart"/></svg>
<div class="t" style="left:1784.10px;top:171.17px;font-size:21.7px;line-height:28px;color:#161616;letter-spacing:-0.075px;-webkit-text-stroke:0.15px #161616;">381.0</div>
<svg class="b" style="left:1842.3px;top:171.99px;color:#6e7272;" width="25.6" height="25.6"><use href="#truck"/></svg>
<div class="b" style="left:941px;top:209.4px;width:941px;height:1.5px;background:#dce2e0;"></div>
<svg class="b" style="left:950px;top:225.4px" width="16" height="20"><path d="M4 4.200L11 10.200L4 16.200" fill="none" stroke="#8e9393" stroke-width="2.400"/></svg>
<div class="t" style="left:974.10px;top:222.36px;font-size:21.7px;line-height:28px;color:#161616;letter-spacing:-0.233px;-webkit-text-stroke:0.15px #161616;">2025-11-10</div>
<div class="t" style="left:1239.30px;top:222.36px;font-size:21.7px;line-height:28px;color:#ee9a3a;letter-spacing:0.625px;-webkit-text-stroke:0.15px #ee9a3a;">264.0</div>
<svg class="b" style="left:1300.3px;top:223.18px;color:#555;" width="25.6" height="25.6"><use href="#can"/></svg>
<div class="t" style="left:1388.10px;top:222.36px;font-size:21.7px;line-height:28px;color:#161616;letter-spacing:0.433px;-webkit-text-stroke:0.15px #161616;">25.0</div>
<svg class="b" style="left:1436.1px;top:223.38px;" width="25.8" height="21.8"><use href="#calf"/></svg>
<div class="t" style="left:1526.40px;top:222.36px;font-size:21.7px;line-height:28px;color:#161616;letter-spacing:-0.500px;-webkit-text-stroke:0.15px #161616;">15.0</div>
<svg class="b" style="left:1572.4px;top:221.57999999999998px;" width="21.4" height="28.1"><use href="#bottle"/></svg>
<div class="t" style="left:1661.90px;top:222.36px;font-size:21.7px;line-height:28px;color:#161616;letter-spacing:-0.500px;-webkit-text-stroke:0.15px #161616;">15.0</div>
<svg class="b" style="left:1706.8px;top:223.18px;color:#6e7272;" width="25.6" height="25.6"><use href="#cart"/></svg>
<div class="t" style="left:1781.30px;top:222.36px;font-size:21.7px;line-height:28px;color:#161616;letter-spacing:0.625px;-webkit-text-stroke:0.15px #161616;">209.0</div>
<svg class="b" style="left:1842.3px;top:223.18px;color:#6e7272;" width="25.6" height="25.6"><use href="#truck"/></svg>
<div class="b" style="left:941px;top:260.6px;width:941px;height:1.5px;background:#dce2e0;"></div>
<svg class="b" style="left:950px;top:276.6px" width="16" height="20"><path d="M4 4.200L11 10.200L4 16.200" fill="none" stroke="#8e9393" stroke-width="2.400"/></svg>
<div class="t" style="left:974.10px;top:273.55px;font-size:21.7px;line-height:28px;color:#161616;letter-spacing:0.078px;-webkit-text-stroke:0.15px #161616;">2025-11-05</div>
<div class="t" style="left:1239.30px;top:273.55px;font-size:21.7px;line-height:28px;color:#ee9a3a;letter-spacing:0.625px;-webkit-text-stroke:0.15px #ee9a3a;">245.0</div>
<svg class="b" style="left:1300.3px;top:274.37px;color:#555;" width="25.6" height="25.6"><use href="#can"/></svg>
<div class="t" style="left:1390.90px;top:273.55px;font-size:21.7px;line-height:28px;color:#161616;letter-spacing:-0.500px;-webkit-text-stroke:0.15px #161616;">15.0</div>
<svg class="b" style="left:1436.1px;top:274.57px;" width="25.8" height="21.8"><use href="#calf"/></svg>
<div class="t" style="left:1536.90px;top:273.55px;font-size:21.7px;line-height:28px;color:#161616;-webkit-text-stroke:0.15px #161616;">0.0</div>
<svg class="b" style="left:1572.4px;top:272.77px;" width="21.4" height="28.1"><use href="#bottle"/></svg>
<div class="t" style="left:1661.90px;top:273.55px;font-size:21.7px;line-height:28px;color:#161616;letter-spacing:-0.500px;-webkit-text-stroke:0.15px #161616;">15.0</div>
<svg class="b" style="left:1706.8px;top:274.37px;color:#6e7272;" width="25.6" height="25.6"><use href="#cart"/></svg>
<div class="t" style="left:1784.10px;top:273.55px;font-size:21.7px;line-height:28px;color:#161616;letter-spacing:-0.075px;-webkit-text-stroke:0.15px #161616;">215.0</div>
<svg class="b" style="left:1842.3px;top:274.37px;color:#6e7272;" width="25.6" height="25.6"><use href="#truck"/></svg>
<div class="b" style="left:941px;top:311.8px;width:941px;height:1.5px;background:#dce2e0;"></div>
<svg class="b" style="left:950px;top:327.8px" width="16" height="20"><path d="M4 4.200L11 10.200L4 16.200" fill="none" stroke="#8e9393" stroke-width="2.400"/></svg>
<div class="t" style="left:974.10px;top:324.74px;font-size:21.7px;line-height:28px;color:#161616;letter-spacing:-0.100px;-webkit-text-stroke:0.15px #161616;">2025-10-31</div>
<div class="t" style="left:1252.60px;top:324.74px;font-size:21.7px;line-height:28px;color:#ee9a3a;letter-spacing:0.433px;-webkit-text-stroke:0.15px #ee9a3a;">25.0</div>
<svg class="b" style="left:1300.3px;top:325.56px;color:#555;" width="25.6" height="25.6"><use href="#can"/></svg>
<div class="t" style="left:1401.40px;top:324.74px;font-size:21.7px;line-height:28px;color:#161616;-webkit-text-stroke:0.15px #161616;">0.0</div>
<svg class="b" style="left:1436.1px;top:325.76px;" width="25.8" height="21.8"><use href="#calf"/></svg>
<div class="t" style="left:1536.90px;top:324.74px;font-size:21.7px;line-height:28px;color:#161616;-webkit-text-stroke:0.15px #161616;">0.0</div>
<svg class="b" style="left:1572.4px;top:323.96px;" width="21.4" height="28.1"><use href="#bottle"/></svg>
<div class="t" style="left:1659.10px;top:324.74px;font-size:21.7px;line-height:28px;color:#161616;letter-spacing:0.433px;-webkit-text-stroke:0.15px #161616;">25.0</div>
<svg class="b" style="left:1706.8px;top:325.56px;color:#6e7272;" width="25.6" height="25.6"><use href="#cart"/></svg>
<div class="t" style="left:1807.90px;top:324.74px;font-size:21.7px;line-height:28px;color:#161616;-webkit-text-stroke:0.15px #161616;">0.0</div>
<svg class="b" style="left:1842.3px;top:325.56px;color:#6e7272;" width="25.6" height="25.6"><use href="#truck"/></svg>
<div class="b" style="left:941px;top:363.0px;width:941px;height:1.5px;background:#dce2e0;"></div>
<svg class="b" style="left:950px;top:378.9px" width="16" height="20"><path d="M4 4.200L11 10.200L4 16.200" fill="none" stroke="#8e9393" stroke-width="2.400"/></svg>
<div class="t" style="left:974.10px;top:375.93px;font-size:21.7px;line-height:28px;color:#161616;letter-spacing:0.211px;-webkit-text-stroke:0.15px #161616;">2025-10-25</div>
<div class="t" style="left:1242.10px;top:375.93px;font-size:21.7px;line-height:28px;color:#ee9a3a;letter-spacing:-0.075px;-webkit-text-stroke:0.15px #ee9a3a;">138.0</div>
<svg class="b" style="left:1300.3px;top:376.75px;color:#555;" width="25.6" height="25.6"><use href="#can"/></svg>
<div class="t" style="left:1401.40px;top:375.93px;font-size:21.7px;line-height:28px;color:#161616;-webkit-text-stroke:0.15px #161616;">0.0</div>
<svg class="b" style="left:1436.1px;top:376.95px;" width="25.8" height="21.8"><use href="#calf"/></svg>
<div class="t" style="left:1536.90px;top:375.93px;font-size:21.7px;line-height:28px;color:#161616;-webkit-text-stroke:0.15px #161616;">0.0</div>
<svg class="b" style="left:1572.4px;top:375.15px;" width="21.4" height="28.1"><use href="#bottle"/></svg>
<div class="t" style="left:1672.40px;top:375.93px;font-size:21.7px;line-height:28px;color:#161616;-webkit-text-stroke:0.15px #161616;">0.0</div>
<svg class="b" style="left:1706.8px;top:376.75px;color:#6e7272;" width="25.6" height="25.6"><use href="#cart"/></svg>
<div class="t" style="left:1784.10px;top:375.93px;font-size:21.7px;line-height:28px;color:#161616;letter-spacing:-0.075px;-webkit-text-stroke:0.15px #161616;">138.0</div>
<svg class="b" style="left:1842.3px;top:376.75px;color:#6e7272;" width="25.6" height="25.6"><use href="#truck"/></svg>
<div class="b" style="left:941px;top:414.1px;width:941px;height:1.5px;background:#dce2e0;"></div>
<svg class="b" style="left:950px;top:430.1px" width="16" height="20"><path d="M4 4.200L11 10.200L4 16.200" fill="none" stroke="#8e9393" stroke-width="2.400"/></svg>
<div class="t" style="left:974.10px;top:427.12px;font-size:21.7px;line-height:28px;color:#161616;letter-spacing:-0.100px;-webkit-text-stroke:0.15px #161616;">2025-10-21</div>
<div class="t" style="left:1239.30px;top:427.12px;font-size:21.7px;line-height:28px;color:#ee9a3a;letter-spacing:0.625px;-webkit-text-stroke:0.15px #ee9a3a;">222.0</div>
<svg class="b" style="left:1300.3px;top:427.94px;color:#555;" width="25.6" height="25.6"><use href="#can"/></svg>
<div class="t" style="left:1388.10px;top:427.12px;font-size:21.7px;line-height:28px;color:#161616;letter-spacing:0.433px;-webkit-text-stroke:0.15px #161616;">20.0</div>
<svg class="b" style="left:1436.1px;top:428.14px;" width="25.8" height="21.8"><use href="#calf"/></svg>
<div class="t" style="left:1526.40px;top:427.12px;font-size:21.7px;line-height:28px;color:#161616;letter-spacing:-0.500px;-webkit-text-stroke:0.15px #161616;">15.0</div>
<svg class="b" style="left:1572.4px;top:426.34px;" width="21.4" height="28.1"><use href="#bottle"/></svg>
<div class="t" style="left:1659.10px;top:427.12px;font-size:21.7px;line-height:28px;color:#161616;letter-spacing:0.433px;-webkit-text-stroke:0.15px #161616;">30.0</div>
<svg class="b" style="left:1706.8px;top:427.94px;color:#6e7272;" width="25.6" height="25.6"><use href="#cart"/></svg>
<div class="t" style="left:1785.90px;top:427.12px;font-size:21.7px;line-height:28px;color:#161616;letter-spacing:-0.525px;-webkit-text-stroke:0.15px #161616;">157.0</div>
<svg class="b" style="left:1842.3px;top:427.94px;color:#6e7272;" width="25.6" height="25.6"><use href="#truck"/></svg>
<div class="b" style="left:941px;top:465.3px;width:941px;height:1.5px;background:#dce2e0;"></div>
<svg class="b" style="left:950px;top:481.3px" width="16" height="20"><path d="M4 4.200L11 10.200L4 16.200" fill="none" stroke="#8e9393" stroke-width="2.400"/></svg>
<div class="t" style="left:974.10px;top:478.31px;font-size:21.7px;line-height:28px;color:#161616;letter-spacing:0.211px;-webkit-text-stroke:0.15px #161616;">2025-10-20</div>
<div class="t" style="left:1239.30px;top:478.31px;font-size:21.7px;line-height:28px;color:#ee9a3a;letter-spacing:0.625px;-webkit-text-stroke:0.15px #ee9a3a;">245.0</div>
<svg class="b" style="left:1300.3px;top:479.13px;color:#555;" width="25.6" height="25.6"><use href="#can"/></svg>
<div class="t" style="left:1390.90px;top:478.31px;font-size:21.7px;line-height:28px;color:#161616;letter-spacing:-0.500px;-webkit-text-stroke:0.15px #161616;">15.0</div>
<svg class="b" style="left:1436.1px;top:479.33px;" width="25.8" height="21.8"><use href="#calf"/></svg>
<div class="t" style="left:1526.40px;top:478.31px;font-size:21.7px;line-height:28px;color:#161616;letter-spacing:-0.500px;-webkit-text-stroke:0.15px #161616;">10.0</div>
<svg class="b" style="left:1572.4px;top:477.53px;" width="21.4" height="28.1"><use href="#bottle"/></svg>
<div class="t" style="left:1661.90px;top:478.31px;font-size:21.7px;line-height:28px;color:#161616;letter-spacing:-0.500px;-webkit-text-stroke:0.15px #161616;">10.0</div>
<svg class="b" style="left:1706.8px;top:479.13px;color:#6e7272;" width="25.6" height="25.6"><use href="#cart"/></svg>
<div class="t" style="left:1784.10px;top:478.31px;font-size:21.7px;line-height:28px;color:#161616;letter-spacing:-0.075px;-webkit-text-stroke:0.15px #161616;">210.0</div>
<svg class="b" style="left:1842.3px;top:479.13px;color:#6e7272;" width="25.6" height="25.6"><use href="#truck"/></svg>
<div class="b" style="left:941px;top:516.5px;width:941px;height:1.5px;background:#dce2e0;"></div>
<svg class="b" style="left:950px;top:532.5px" width="16" height="20"><path d="M4 4.200L11 10.200L4 16.200" fill="none" stroke="#8e9393" stroke-width="2.400"/></svg>
<div class="t" style="left:974.10px;top:529.50px;font-size:21.7px;line-height:28px;color:#161616;letter-spacing:-0.100px;-webkit-text-stroke:0.15px #161616;">2025-10-15</div>
<div class="t" style="left:1239.30px;top:529.50px;font-size:21.7px;line-height:28px;color:#ee9a3a;letter-spacing:0.625px;-webkit-text-stroke:0.15px #ee9a3a;">256.0</div>
<svg class="b" style="left:1300.3px;top:530.3199999999999px;color:#555;" width="25.6" height="25.6"><use href="#can"/></svg>
<div class="t" style="left:1390.90px;top:529.50px;font-size:21.7px;line-height:28px;color:#161616;letter-spacing:-0.500px;-webkit-text-stroke:0.15px #161616;">15.0</div>
<svg class="b" style="left:1436.1px;top:530.52px;" width="25.8" height="21.8"><use href="#calf"/></svg>
<div class="t" style="left:1536.90px;top:529.50px;font-size:21.7px;line-height:28px;color:#161616;-webkit-text-stroke:0.15px #161616;">0.0</div>
<svg class="b" style="left:1572.4px;top:528.72px;" width="21.4" height="28.1"><use href="#bottle"/></svg>
<div class="t" style="left:1672.40px;top:529.50px;font-size:21.7px;line-height:28px;color:#161616;-webkit-text-stroke:0.15px #161616;">0.0</div>
<svg class="b" style="left:1706.8px;top:530.3199999999999px;color:#6e7272;" width="25.6" height="25.6"><use href="#cart"/></svg>
<div class="t" style="left:1784.10px;top:529.50px;font-size:21.7px;line-height:28px;color:#161616;letter-spacing:-0.075px;-webkit-text-stroke:0.15px #161616;">241.0</div>
<svg class="b" style="left:1842.3px;top:530.3199999999999px;color:#6e7272;" width="25.6" height="25.6"><use href="#truck"/></svg>
<div class="b" style="left:941px;top:567.7px;width:941px;height:1.5px;background:#dce2e0;"></div>
<svg class="b" style="left:950px;top:583.7px" width="16" height="20"><path d="M4 4.200L11 10.200L4 16.200" fill="none" stroke="#8e9393" stroke-width="2.400"/></svg>
<div class="t" style="left:974.10px;top:580.69px;font-size:21.7px;line-height:28px;color:#161616;letter-spacing:-0.100px;-webkit-text-stroke:0.15px #161616;">2025-10-10</div>
<div class="t" style="left:1242.10px;top:580.69px;font-size:21.7px;line-height:28px;color:#ee9a3a;letter-spacing:-0.075px;-webkit-text-stroke:0.15px #ee9a3a;">415.0</div>
<svg class="b" style="left:1300.3px;top:581.51px;color:#555;" width="25.6" height="25.6"><use href="#can"/></svg>
<div class="t" style="left:1388.10px;top:580.69px;font-size:21.7px;line-height:28px;color:#161616;letter-spacing:0.433px;-webkit-text-stroke:0.15px #161616;">30.0</div>
<svg class="b" style="left:1436.1px;top:581.71px;" width="25.8" height="21.8"><use href="#calf"/></svg>
<div class="t" style="left:1536.90px;top:580.69px;font-size:21.7px;line-height:28px;color:#161616;-webkit-text-stroke:0.15px #161616;">0.0</div>
<svg class="b" style="left:1572.4px;top:579.9100000000001px;" width="21.4" height="28.1"><use href="#bottle"/></svg>
<div class="t" style="left:1659.10px;top:580.69px;font-size:21.7px;line-height:28px;color:#161616;letter-spacing:0.433px;-webkit-text-stroke:0.15px #161616;">39.0</div>
<svg class="b" style="left:1706.8px;top:581.51px;color:#6e7272;" width="25.6" height="25.6"><use href="#cart"/></svg>
<div class="t" style="left:1781.30px;top:580.69px;font-size:21.7px;line-height:28px;color:#161616;letter-spacing:0.625px;-webkit-text-stroke:0.15px #161616;">346.0</div>
<svg class="b" style="left:1842.3px;top:581.51px;color:#6e7272;" width="25.6" height="25.6"><use href="#truck"/></svg>
<div class="b" style="left:941px;top:618.9px;width:941px;height:1.5px;background:#dce2e0;"></div>
<svg class="b" style="left:950px;top:634.9px" width="16" height="20"><path d="M4 4.200L11 10.200L4 16.200" fill="none" stroke="#8e9393" stroke-width="2.400"/></svg>
<div class="t" style="left:974.10px;top:631.88px;font-size:21.7px;line-height:28px;color:#161616;letter-spacing:0.211px;-webkit-text-stroke:0.15px #161616;">2025-10-09</div>
<div class="t" style="left:1242.10px;top:631.88px;font-size:21.7px;line-height:28px;color:#ee9a3a;letter-spacing:-0.075px;-webkit-text-stroke:0.15px #ee9a3a;">201.0</div>
<svg class="b" style="left:1300.3px;top:632.6999999999999px;color:#555;" width="25.6" height="25.6"><use href="#can"/></svg>
<div class="t" style="left:1390.90px;top:631.88px;font-size:21.7px;line-height:28px;color:#161616;letter-spacing:-0.500px;-webkit-text-stroke:0.15px #161616;">15.0</div>
<svg class="b" style="left:1436.1px;top:632.9px;" width="25.8" height="21.8"><use href="#calf"/></svg>
<div class="t" style="left:1526.40px;top:631.88px;font-size:21.7px;line-height:28px;color:#161616;letter-spacing:-0.500px;-webkit-text-stroke:0.15px #161616;">10.0</div>
<svg class="b" style="left:1572.4px;top:631.1px;" width="21.4" height="28.1"><use href="#bottle"/></svg>
<div class="t" style="left:1659.10px;top:631.88px;font-size:21.7px;line-height:28px;color:#161616;letter-spacing:0.433px;-webkit-text-stroke:0.15px #161616;">26.0</div>
<svg class="b" style="left:1706.8px;top:632.6999999999999px;color:#6e7272;" width="25.6" height="25.6"><use href="#cart"/></svg>
<div class="t" style="left:1784.10px;top:631.88px;font-size:21.7px;line-height:28px;color:#161616;letter-spacing:-0.075px;-webkit-text-stroke:0.15px #161616;">150.0</div>
<svg class="b" style="left:1842.3px;top:632.6999999999999px;color:#6e7272;" width="25.6" height="25.6"><use href="#truck"/></svg>
<div class="b" style="left:941px;top:670.1px;width:941px;height:1.5px;background:#dce2e0;"></div>
<svg class="b" style="left:950px;top:686.1px" width="16" height="20"><path d="M4 4.200L11 10.200L4 16.200" fill="none" stroke="#8e9393" stroke-width="2.400"/></svg>
<div class="t" style="left:974.10px;top:683.07px;font-size:21.7px;line-height:28px;color:#161616;letter-spacing:0.211px;-webkit-text-stroke:0.15px #161616;">2025-10-02</div>
<div class="t" style="left:1239.30px;top:683.07px;font-size:21.7px;line-height:28px;color:#ee9a3a;letter-spacing:0.625px;-webkit-text-stroke:0.15px #ee9a3a;">229.0</div>
<svg class="b" style="left:1300.3px;top:683.8899999999999px;color:#555;" width="25.6" height="25.6"><use href="#can"/></svg>
<div class="t" style="left:1401.40px;top:683.07px;font-size:21.7px;line-height:28px;color:#161616;-webkit-text-stroke:0.15px #161616;">0.0</div>
<svg class="b" style="left:1436.1px;top:684.0899999999999px;" width="25.8" height="21.8"><use href="#calf"/></svg>
<div class="t" style="left:1536.90px;top:683.07px;font-size:21.7px;line-height:28px;color:#161616;-webkit-text-stroke:0.15px #161616;">0.0</div>
<svg class="b" style="left:1572.4px;top:682.29px;" width="21.4" height="28.1"><use href="#bottle"/></svg>
<div class="t" style="left:1672.40px;top:683.07px;font-size:21.7px;line-height:28px;color:#161616;-webkit-text-stroke:0.15px #161616;">0.0</div>
<svg class="b" style="left:1706.8px;top:683.8899999999999px;color:#6e7272;" width="25.6" height="25.6"><use href="#cart"/></svg>
<div class="t" style="left:1781.30px;top:683.07px;font-size:21.7px;line-height:28px;color:#161616;letter-spacing:0.625px;-webkit-text-stroke:0.15px #161616;">229.0</div>
<svg class="b" style="left:1842.3px;top:683.8899999999999px;color:#6e7272;" width="25.6" height="25.6"><use href="#truck"/></svg>
<div class="b" style="left:941px;top:721.3px;width:941px;height:1.5px;background:#dce2e0;"></div>
<svg class="b" style="left:950px;top:737.3px" width="16" height="20"><path d="M4 4.200L11 10.200L4 16.200" fill="none" stroke="#8e9393" stroke-width="2.400"/></svg>
<div class="t" style="left:974.10px;top:734.26px;font-size:21.7px;line-height:28px;color:#161616;letter-spacing:0.522px;-webkit-text-stroke:0.15px #161616;">2025-09-28</div>
<div class="t" style="left:1239.30px;top:734.26px;font-size:21.7px;line-height:28px;color:#2f8576;letter-spacing:0.625px;-webkit-text-stroke:0.15px #2f8576;">860.0</div>
<svg class="b" style="left:1300.3px;top:735.0799999999999px;color:#555;" width="25.6" height="25.6"><use href="#can"/></svg>
<div class="t" style="left:1388.10px;top:734.26px;font-size:21.7px;line-height:28px;color:#161616;letter-spacing:0.433px;-webkit-text-stroke:0.15px #161616;">80.0</div>
<svg class="b" style="left:1436.1px;top:735.28px;" width="25.8" height="21.8"><use href="#calf"/></svg>
<div class="t" style="left:1526.40px;top:734.26px;font-size:21.7px;line-height:28px;color:#161616;letter-spacing:-0.500px;-webkit-text-stroke:0.15px #161616;">15.0</div>
<svg class="b" style="left:1572.4px;top:733.48px;" width="21.4" height="28.1"><use href="#bottle"/></svg>
<div class="t" style="left:1648.60px;top:734.26px;font-size:21.7px;line-height:28px;color:#161616;letter-spacing:-0.075px;-webkit-text-stroke:0.15px #161616;">120.0</div>
<svg class="b" style="left:1706.8px;top:735.0799999999999px;color:#6e7272;" width="25.6" height="25.6"><use href="#cart"/></svg>
<div class="t" style="left:1781.30px;top:734.26px;font-size:21.7px;line-height:28px;color:#161616;letter-spacing:0.625px;-webkit-text-stroke:0.15px #161616;">645.0</div>
<svg class="b" style="left:1842.3px;top:735.0799999999999px;color:#6e7272;" width="25.6" height="25.6"><use href="#truck"/></svg>
<div class="b" style="left:941px;top:772.5px;width:941px;height:1.5px;background:#dce2e0;"></div>
<svg class="b" style="left:950px;top:788.5px" width="16" height="20"><path d="M4 4.200L11 10.200L4 16.200" fill="none" stroke="#8e9393" stroke-width="2.400"/></svg>
<div class="t" style="left:974.10px;top:785.45px;font-size:21.7px;line-height:28px;color:#161616;letter-spacing:0.522px;-webkit-text-stroke:0.15px #161616;">2025-09-26</div>
<div class="t" style="left:1255.40px;top:785.45px;font-size:21.7px;line-height:28px;color:#ee9a3a;letter-spacing:-0.500px;-webkit-text-stroke:0.15px #ee9a3a;">81.0</div>
<svg class="b" style="left:1300.3px;top:786.27px;color:#555;" width="25.6" height="25.6"><use href="#can"/></svg>
<div class="t" style="left:1401.40px;top:785.45px;font-size:21.7px;line-height:28px;color:#161616;-webkit-text-stroke:0.15px #161616;">0.0</div>
<svg class="b" style="left:1436.1px;top:786.47px;" width="25.8" height="21.8"><use href="#calf"/></svg>
<div class="t" style="left:1536.90px;top:785.45px;font-size:21.7px;line-height:28px;color:#161616;-webkit-text-stroke:0.15px #161616;">0.0</div>
<svg class="b" style="left:1572.4px;top:784.6700000000001px;" width="21.4" height="28.1"><use href="#bottle"/></svg>
<div class="t" style="left:1672.40px;top:785.45px;font-size:21.7px;line-height:28px;color:#161616;-webkit-text-stroke:0.15px #161616;">0.0</div>
<svg class="b" style="left:1706.8px;top:786.27px;color:#6e7272;" width="25.6" height="25.6"><use href="#cart"/></svg>
<div class="t" style="left:1797.40px;top:785.45px;font-size:21.7px;line-height:28px;color:#161616;letter-spacing:-0.500px;-webkit-text-stroke:0.15px #161616;">81.0</div>
<svg class="b" style="left:1842.3px;top:786.27px;color:#6e7272;" width="25.6" height="25.6"><use href="#truck"/></svg>
<div class="b" style="left:941px;top:823.7px;width:941px;height:1.5px;background:#dce2e0;"></div>
<svg class="b" style="left:950px;top:839.7px" width="16" height="20"><path d="M4 4.200L11 10.200L4 16.200" fill="none" stroke="#8e9393" stroke-width="2.400"/></svg>
<div class="t" style="left:974.10px;top:836.64px;font-size:21.7px;line-height:28px;color:#161616;letter-spacing:0.078px;-webkit-text-stroke:0.15px #161616;">2025-09-11</div>
<div class="t" style="left:1242.10px;top:836.64px;font-size:21.7px;line-height:28px;color:#ee9a3a;letter-spacing:-0.075px;-webkit-text-stroke:0.15px #ee9a3a;">142.0</div>
<svg class="b" style="left:1300.3px;top:837.4599999999999px;color:#555;" width="25.6" height="25.6"><use href="#can"/></svg>
<div class="t" style="left:1401.40px;top:836.64px;font-size:21.7px;line-height:28px;color:#161616;-webkit-text-stroke:0.15px #161616;">0.0</div>
<svg class="b" style="left:1436.1px;top:837.66px;" width="25.8" height="21.8"><use href="#calf"/></svg>
<div class="t" style="left:1536.90px;top:836.64px;font-size:21.7px;line-height:28px;color:#161616;-webkit-text-stroke:0.15px #161616;">0.0</div>
<svg class="b" style="left:1572.4px;top:835.86px;" width="21.4" height="28.1"><use href="#bottle"/></svg>
<div class="t" style="left:1672.40px;top:836.64px;font-size:21.7px;line-height:28px;color:#161616;-webkit-text-stroke:0.15px #161616;">0.0</div>
<svg class="b" style="left:1706.8px;top:837.4599999999999px;color:#6e7272;" width="25.6" height="25.6"><use href="#cart"/></svg>
<div class="t" style="left:1784.10px;top:836.64px;font-size:21.7px;line-height:28px;color:#161616;letter-spacing:-0.075px;-webkit-text-stroke:0.15px #161616;">142.0</div>
<svg class="b" style="left:1842.3px;top:837.4599999999999px;color:#6e7272;" width="25.6" height="25.6"><use href="#truck"/></svg>
<div class="b" style="left:941px;top:874.9px;width:941px;height:1.5px;background:#dce2e0;"></div>
<svg class="b" style="left:950px;top:890.8px" width="16" height="20"><path d="M4 4.200L11 10.200L4 16.200" fill="none" stroke="#8e9393" stroke-width="2.400"/></svg>
<div class="t" style="left:974.10px;top:887.83px;font-size:21.7px;line-height:28px;color:#161616;letter-spacing:0.011px;-webkit-text-stroke:0.15px #161616;">2025-07-31</div>
<div class="t" style="left:1255.40px;top:887.83px;font-size:21.7px;line-height:28px;color:#ee9a3a;letter-spacing:-0.500px;-webkit-text-stroke:0.15px #ee9a3a;">14.8</div>
<svg class="b" style="left:1300.3px;top:888.6499999999999px;color:#555;" width="25.6" height="25.6"><use href="#can"/></svg>
<div class="t" style="left:1404.20px;top:887.83px;font-size:21.7px;line-height:28px;color:#161616;letter-spacing:-1.400px;-webkit-text-stroke:0.15px #161616;">1.6</div>
<svg class="b" style="left:1436.1px;top:888.8499999999999px;" width="25.8" height="21.8"><use href="#calf"/></svg>
<div class="t" style="left:1536.90px;top:887.83px;font-size:21.7px;line-height:28px;color:#161616;-webkit-text-stroke:0.15px #161616;">0.0</div>
<svg class="b" style="left:1572.4px;top:887.05px;" width="21.4" height="28.1"><use href="#bottle"/></svg>
<div class="t" style="left:1672.40px;top:887.83px;font-size:21.7px;line-height:28px;color:#161616;-webkit-text-stroke:0.15px #161616;">0.0</div>
<svg class="b" style="left:1706.8px;top:888.6499999999999px;color:#6e7272;" width="25.6" height="25.6"><use href="#cart"/></svg>
<div class="t" style="left:1797.40px;top:887.83px;font-size:21.7px;line-height:28px;color:#161616;letter-spacing:-0.500px;-webkit-text-stroke:0.15px #161616;">13.2</div>
<svg class="b" style="left:1842.3px;top:888.6499999999999px;color:#6e7272;" width="25.6" height="25.6"><use href="#truck"/></svg>
<div class="b" style="left:941px;top:926.0px;width:941px;height:1.5px;background:#dce2e0;"></div>
<svg class="b" style="left:950px;top:942.0px" width="16" height="20"><path d="M4 4.200L11 10.200L4 16.200" fill="none" stroke="#8e9393" stroke-width="2.400"/></svg>
<div class="t" style="left:974.10px;top:939.02px;font-size:21.7px;line-height:28px;color:#161616;letter-spacing:0.322px;-webkit-text-stroke:0.15px #161616;">2025-07-30</div>
<div class="t" style="left:1239.30px;top:939.02px;font-size:21.7px;line-height:28px;color:#ee9a3a;letter-spacing:0.625px;-webkit-text-stroke:0.15px #ee9a3a;">269.0</div>
<svg class="b" style="left:1300.3px;top:939.8399999999999px;color:#555;" width="25.6" height="25.6"><use href="#can"/></svg>
<div class="t" style="left:1390.90px;top:939.02px;font-size:21.7px;line-height:28px;color:#161616;letter-spacing:-0.500px;-webkit-text-stroke:0.15px #161616;">15.0</div>
<svg class="b" style="left:1436.1px;top:940.04px;" width="25.8" height="21.8"><use href="#calf"/></svg>
<div class="t" style="left:1526.40px;top:939.02px;font-size:21.7px;line-height:28px;color:#161616;letter-spacing:-0.500px;-webkit-text-stroke:0.15px #161616;">10.0</div>
<svg class="b" style="left:1572.4px;top:938.24px;" width="21.4" height="28.1"><use href="#bottle"/></svg>
<div class="t" style="left:1659.10px;top:939.02px;font-size:21.7px;line-height:28px;color:#161616;letter-spacing:0.433px;-webkit-text-stroke:0.15px #161616;">20.0</div>
<svg class="b" style="left:1706.8px;top:939.8399999999999px;color:#6e7272;" width="25.6" height="25.6"><use href="#cart"/></svg>
<div class="t" style="left:1781.30px;top:939.02px;font-size:21.7px;line-height:28px;color:#161616;letter-spacing:0.625px;-webkit-text-stroke:0.15px #161616;">224.0</div>
<svg class="b" style="left:1842.3px;top:939.8399999999999px;color:#6e7272;" width="25.6" height="25.6"><use href="#truck"/></svg>
<div class="b" style="left:941px;top:977.2px;width:941px;height:1.5px;background:#dce2e0;"></div>
<svg class="b" style="left:950px;top:993.2px" width="16" height="20"><path d="M4 4.200L11 10.200L4 16.200" fill="none" stroke="#8e9393" stroke-width="2.400"/></svg>
<div class="t" style="left:974.10px;top:990.21px;font-size:21.7px;line-height:28px;color:#161616;letter-spacing:0.322px;-webkit-text-stroke:0.15px #161616;">2025-07-23</div>
<div class="t" style="left:1252.60px;top:990.21px;font-size:21.7px;line-height:28px;color:#ee9a3a;letter-spacing:0.433px;-webkit-text-stroke:0.15px #ee9a3a;">50.0</div>
<svg class="b" style="left:1300.3px;top:991.03px;color:#555;" width="25.6" height="25.6"><use href="#can"/></svg>
<div class="t" style="left:1401.40px;top:990.21px;font-size:21.7px;line-height:28px;color:#161616;-webkit-text-stroke:0.15px #161616;">0.0</div>
<svg class="b" style="left:1436.1px;top:991.23px;" width="25.8" height="21.8"><use href="#calf"/></svg>
<div class="t" style="left:1536.90px;top:990.21px;font-size:21.7px;line-height:28px;color:#161616;-webkit-text-stroke:0.15px #161616;">0.0</div>
<svg class="b" style="left:1572.4px;top:989.4300000000001px;" width="21.4" height="28.1"><use href="#bottle"/></svg>
<div class="t" style="left:1659.10px;top:990.21px;font-size:21.7px;line-height:28px;color:#161616;letter-spacing:0.433px;-webkit-text-stroke:0.15px #161616;">50.0</div>
<svg class="b" style="left:1706.8px;top:991.03px;color:#6e7272;" width="25.6" height="25.6"><use href="#cart"/></svg>
<div class="t" style="left:1807.90px;top:990.21px;font-size:21.7px;line-height:28px;color:#161616;-webkit-text-stroke:0.15px #161616;">0.0</div>
<svg class="b" style="left:1842.3px;top:991.03px;color:#6e7272;" width="25.6" height="25.6"><use href="#truck"/></svg>
<div class="b" style="left:941px;top:1028.4px;width:941px;height:1.5px;background:#dce2e0;"></div>
<svg class="b" style="left:950px;top:1044.4px" width="16" height="20"><path d="M4 4.200L11 10.200L4 16.200" fill="none" stroke="#8e9393" stroke-width="2.400"/></svg>
<div class="t" style="left:974.10px;top:1041.40px;font-size:21.7px;line-height:28px;color:#161616;letter-spacing:0.011px;-webkit-text-stroke:0.15px #161616;">2025-07-15</div>
<div class="t" style="left:1228.80px;top:1041.40px;font-size:21.7px;line-height:28px;color:#2f8576;letter-spacing:0.180px;-webkit-text-stroke:0.15px #2f8576;">1066.0</div>
<svg class="b" style="left:1300.3px;top:1042.22px;color:#555;" width="25.6" height="25.6"><use href="#can"/></svg>
<div class="t" style="left:1401.40px;top:1041.40px;font-size:21.7px;line-height:28px;color:#161616;-webkit-text-stroke:0.15px #161616;">0.0</div>
<svg class="b" style="left:1436.1px;top:1042.42px;" width="25.8" height="21.8"><use href="#calf"/></svg>
<div class="t" style="left:1536.90px;top:1041.40px;font-size:21.7px;line-height:28px;color:#161616;-webkit-text-stroke:0.15px #161616;">0.0</div>
<svg class="b" style="left:1572.4px;top:1040.6200000000001px;" width="21.4" height="28.1"><use href="#bottle"/></svg>
<div class="t" style="left:1672.40px;top:1041.40px;font-size:21.7px;line-height:28px;color:#161616;-webkit-text-stroke:0.15px #161616;">0.0</div>
<svg class="b" style="left:1706.8px;top:1042.22px;color:#6e7272;" width="25.6" height="25.6"><use href="#cart"/></svg>
<div class="t" style="left:1770.80px;top:1041.40px;font-size:21.7px;line-height:28px;color:#161616;letter-spacing:0.180px;-webkit-text-stroke:0.15px #161616;">1066.0</div>
<svg class="b" style="left:1842.3px;top:1042.22px;color:#6e7272;" width="25.6" height="25.6"><use href="#truck"/></svg>
<div class="b" style="left:941px;top:1079.6px;width:941px;height:1.5px;background:#dce2e0;"></div>
<svg class="b" style="left:950px;top:1095.6px" width="16" height="20"><path d="M4 4.200L11 10.200L4 16.200" fill="none" stroke="#8e9393" stroke-width="2.400"/></svg>
<div class="t" style="left:974.10px;top:1092.59px;font-size:21.7px;line-height:28px;color:#161616;letter-spacing:0.011px;-webkit-text-stroke:0.15px #161616;">2025-07-13</div>
<div class="t" style="left:1252.60px;top:1092.59px;font-size:21.7px;line-height:28px;color:#ee9a3a;letter-spacing:0.433px;-webkit-text-stroke:0.15px #ee9a3a;">89.8</div>
<svg class="b" style="left:1300.3px;top:1093.4099999999999px;color:#555;" width="25.6" height="25.6"><use href="#can"/></svg>
<div class="t" style="left:1401.40px;top:1092.59px;font-size:21.7px;line-height:28px;color:#161616;-webkit-text-stroke:0.15px #161616;">0.0</div>
<svg class="b" style="left:1436.1px;top:1093.61px;" width="25.8" height="21.8"><use href="#calf"/></svg>
<div class="t" style="left:1536.90px;top:1092.59px;font-size:21.7px;line-height:28px;color:#161616;-webkit-text-stroke:0.15px #161616;">0.0</div>
<svg class="b" style="left:1572.4px;top:1091.81px;" width="21.4" height="28.1"><use href="#bottle"/></svg>
<div class="t" style="left:1672.40px;top:1092.59px;font-size:21.7px;line-height:28px;color:#161616;-webkit-text-stroke:0.15px #161616;">0.0</div>
<svg class="b" style="left:1706.8px;top:1093.4099999999999px;color:#6e7272;" width="25.6" height="25.6"><use href="#cart"/></svg>
<div class="t" style="left:1794.60px;top:1092.59px;font-size:21.7px;line-height:28px;color:#161616;letter-spacing:0.433px;-webkit-text-stroke:0.15px #161616;">89.8</div>
<svg class="b" style="left:1842.3px;top:1093.4099999999999px;color:#6e7272;" width="25.6" height="25.6"><use href="#truck"/></svg>
<div class="b" style="left:941px;top:1130.8px;width:941px;height:1.5px;background:#dce2e0;"></div>
<svg class="b" style="left:950px;top:1146.8px" width="16" height="20"><path d="M4 4.200L11 10.200L4 16.200" fill="none" stroke="#8e9393" stroke-width="2.400"/></svg>
<div class="t" style="left:974.10px;top:1143.78px;font-size:21.7px;line-height:28px;color:#161616;letter-spacing:0.322px;-webkit-text-stroke:0.15px #161616;">2025-07-05</div>
<div class="t" style="left:1252.60px;top:1143.78px;font-size:21.7px;line-height:28px;color:#ee9a3a;letter-spacing:0.433px;-webkit-text-stroke:0.15px #ee9a3a;">99.0</div>
<svg class="b" style="left:1300.3px;top:1144.6px;color:#555;" width="25.6" height="25.6"><use href="#can"/></svg>
<div class="t" style="left:1389.90px;top:1143.78px;font-size:21.7px;line-height:28px;color:#161616;letter-spacing:-0.167px;-webkit-text-stroke:0.15px #161616;">27.5</div>
<svg class="b" style="left:1436.1px;top:1144.8px;" width="25.8" height="21.8"><use href="#calf"/></svg>
<div class="t" style="left:1536.90px;top:1143.78px;font-size:21.7px;line-height:28px;color:#161616;-webkit-text-stroke:0.15px #161616;">0.0</div>
<svg class="b" style="left:1572.4px;top:1143.0px;" width="21.4" height="28.1"><use href="#bottle"/></svg>
<div class="t" style="left:1672.40px;top:1143.78px;font-size:21.7px;line-height:28px;color:#161616;-webkit-text-stroke:0.15px #161616;">0.0</div>
<svg class="b" style="left:1706.8px;top:1144.6px;color:#6e7272;" width="25.6" height="25.6"><use href="#cart"/></svg>
<div class="t" style="left:1799.20px;top:1143.78px;font-size:21.7px;line-height:28px;color:#161616;letter-spacing:-1.100px;-webkit-text-stroke:0.15px #161616;">71.5</div>
<svg class="b" style="left:1842.3px;top:1144.6px;color:#6e7272;" width="25.6" height="25.6"><use href="#truck"/></svg>
<div class="b" style="left:941px;top:1182.0px;width:941px;height:1.5px;background:#dce2e0;"></div>
<svg class="b" style="left:950px;top:1198.0px" width="16" height="20"><path d="M4 4.200L11 10.200L4 16.200" fill="none" stroke="#8e9393" stroke-width="2.400"/></svg>
<div class="t" style="left:974.10px;top:1194.97px;font-size:21.7px;line-height:28px;color:#161616;letter-spacing:0.522px;-webkit-text-stroke:0.15px #161616;">2025-06-03</div>
<div class="t" style="left:1239.30px;top:1194.97px;font-size:21.7px;line-height:28px;color:#ee9a3a;letter-spacing:0.625px;-webkit-text-stroke:0.15px #ee9a3a;">359.0</div>
<svg class="b" style="left:1300.3px;top:1195.79px;color:#555;" width="25.6" height="25.6"><use href="#can"/></svg>
<div class="t" style="left:1401.40px;top:1194.97px;font-size:21.7px;line-height:28px;color:#161616;-webkit-text-stroke:0.15px #161616;">0.0</div>
<svg class="b" style="left:1436.1px;top:1195.99px;" width="25.8" height="21.8"><use href="#calf"/></svg>
<div class="t" style="left:1536.90px;top:1194.97px;font-size:21.7px;line-height:28px;color:#161616;-webkit-text-stroke:0.15px #161616;">0.0</div>
<svg class="b" style="left:1572.4px;top:1194.19px;" width="21.4" height="28.1"><use href="#bottle"/></svg>
<div class="t" style="left:1672.40px;top:1194.97px;font-size:21.7px;line-height:28px;color:#161616;-webkit-text-stroke:0.15px #161616;">0.0</div>
<svg class="b" style="left:1706.8px;top:1195.79px;color:#6e7272;" width="25.6" height="25.6"><use href="#cart"/></svg>
<div class="t" style="left:1781.30px;top:1194.97px;font-size:21.7px;line-height:28px;color:#161616;letter-spacing:0.625px;-webkit-text-stroke:0.15px #161616;">359.0</div>
<svg class="b" style="left:1842.3px;top:1195.79px;color:#6e7272;" width="25.6" height="25.6"><use href="#truck"/></svg>
<div class="b" style="left:1757px;top:1167px;width:124px;height:55px;background:#3f9b8b;border-radius:13px;box-shadow:0 3px 6px rgba(0,0,0,0.3);"></div>
<svg class="b" style="left:1776px;top:1180.5px;color:#fff;" width="29" height="29"><use href="#plus"/></svg>
<div class="t" style="left:1818.00px;top:1181.70px;font-size:22.5px;line-height:29px;color:#ffffff;letter-spacing:-0.257px;-webkit-text-stroke:0.22px #ffffff;">Ekle</div>
<div class="b" style="left:872px;top:64px;width:269px;height:230px;background:#eceeed;border-radius:8px;box-shadow:0 3px 8px rgba(0,0,0,0.28),0 0 2px rgba(0,0,0,0.12);"></div>
<div class="b" style="left:872px;top:77px;width:269px;height:51px;background:#e2e5e4;"></div>
<div class="t" style="left:892.00px;top:90.84px;font-size:19.5px;line-height:25px;color:#141414;letter-spacing:0.024px;-webkit-text-stroke:0.5px #141414;">Aylık</div>
<svg class="b" style="left:1089.6px;top:85.4px;color:#6f7373;" width="33" height="33"><use href="#cal"/></svg>
<div class="b" style="left:1099.6px;top:95.5px;width:22px;height:22px;background:#cf3a35;border-radius:50%;"></div>
<div class="t" style="left:1106.43px;top:96.60px;font-size:15px;line-height:20px;color:#ffffff;letter-spacing:-0.300px;-webkit-text-stroke:0.4px #ffffff;">1</div>
<div class="t" style="left:892.00px;top:142.04px;font-size:19.5px;line-height:25px;color:#141414;letter-spacing:0.818px;-webkit-text-stroke:0.5px #141414;">3 Aylık</div>
<svg class="b" style="left:1089.6px;top:136.6px;color:#6f7373;" width="33" height="33"><use href="#cal"/></svg>
<div class="b" style="left:1099.6px;top:146.7px;width:22px;height:22px;background:#cf3a35;border-radius:50%;"></div>
<div class="t" style="left:1106.43px;top:147.80px;font-size:15px;line-height:20px;color:#ffffff;letter-spacing:-0.300px;-webkit-text-stroke:0.4px #ffffff;">3</div>
<div class="t" style="left:892.00px;top:193.24px;font-size:19.5px;line-height:25px;color:#141414;letter-spacing:0.549px;-webkit-text-stroke:0.5px #141414;">Yıllık</div>
<svg class="b" style="left:1089.6px;top:187.8px;color:#6f7373;" width="33" height="33"><use href="#cal"/></svg>
<div class="b" style="left:1099.6px;top:197.9px;width:22px;height:22px;background:#cf3a35;border-radius:50%;"></div>
<div class="t" style="left:1102.41px;top:199.00px;font-size:15px;line-height:20px;color:#ffffff;letter-spacing:-0.300px;-webkit-text-stroke:0.4px #ffffff;">12</div>
<div class="t" style="left:892.00px;top:244.44px;font-size:19.5px;line-height:25px;color:#141414;letter-spacing:0.704px;-webkit-text-stroke:0.5px #141414;">Tarih Seçiniz</div>
<svg class="b" style="left:1089.6px;top:239.00000000000003px;color:#6f7373;" width="33" height="33"><use href="#cal"/></svg>
<div class="b" style="left:1099.6px;top:249.10000000000002px;width:22px;height:22px;background:#cf3a35;border-radius:50%;"></div>
<svg class="b" style="left:1101.3px;top:250.8px;color:#a3a6c4;" width="18.6" height="18.6"><use href="#gear"/></svg>
</div>
</body></html>
